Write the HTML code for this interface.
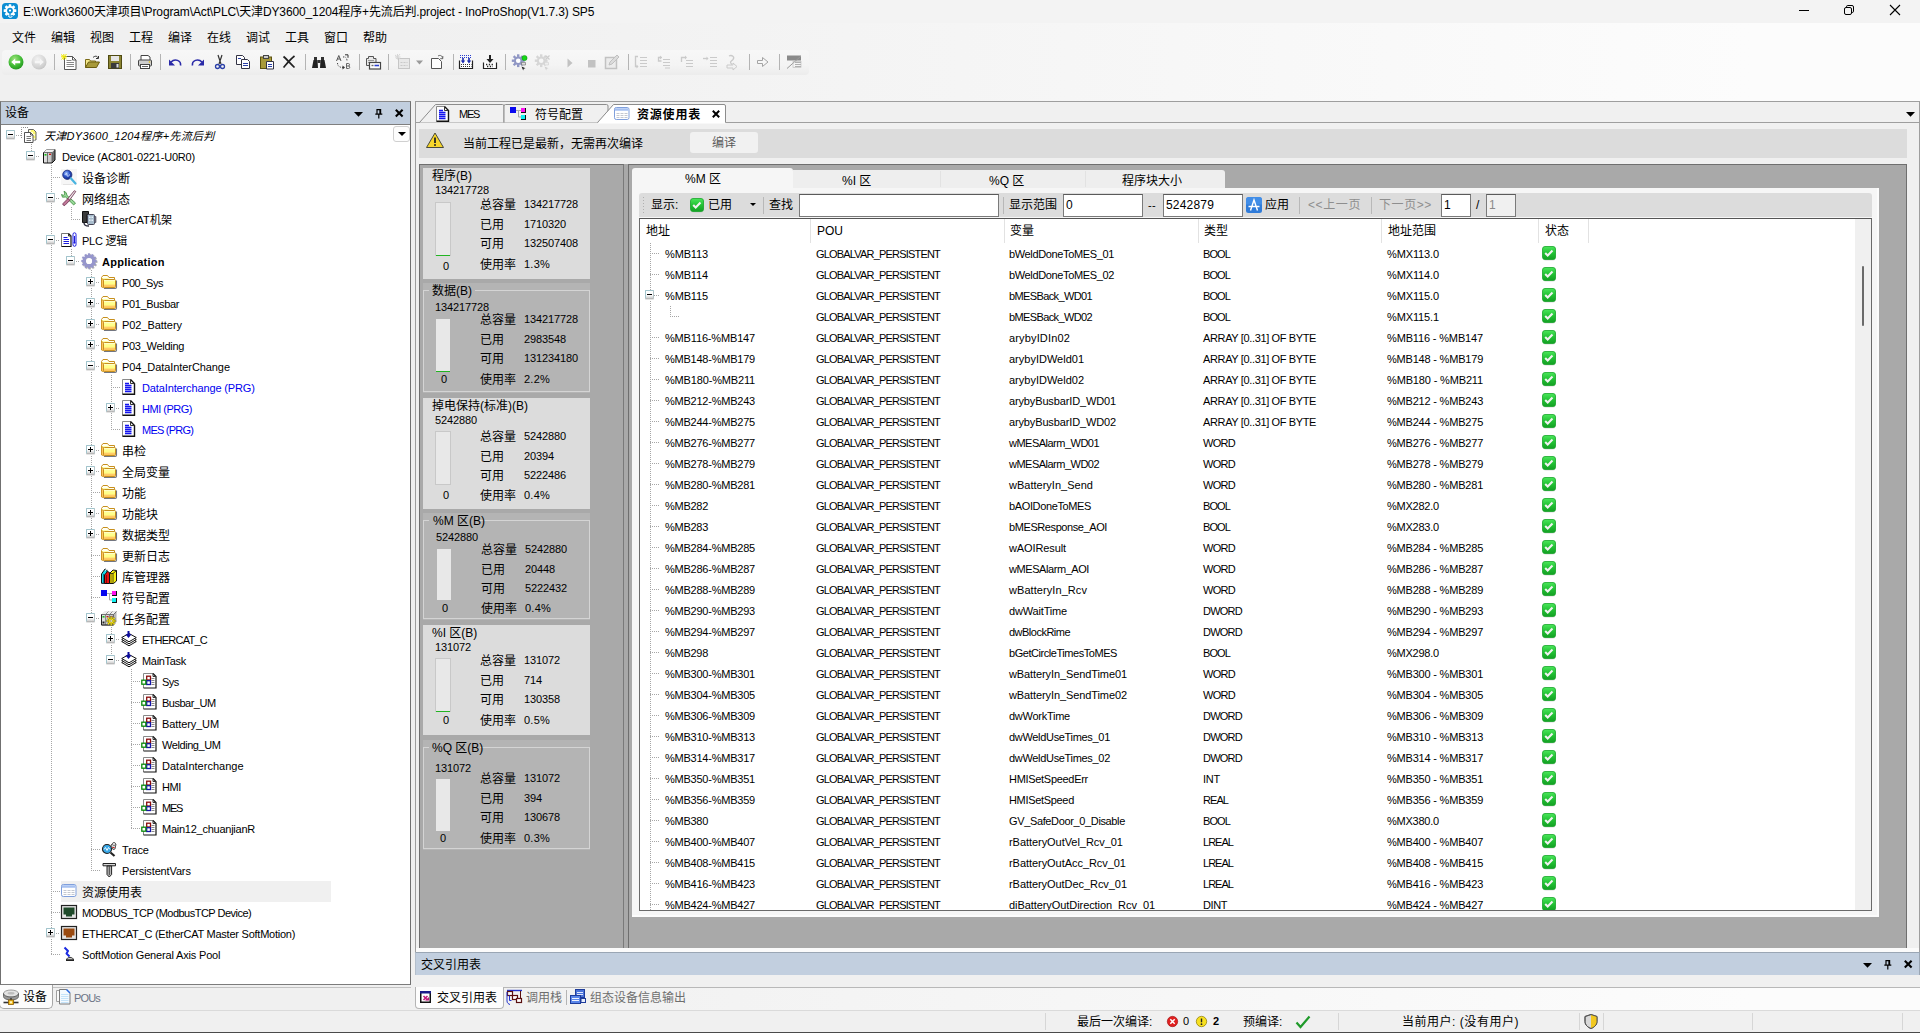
<!DOCTYPE html><html lang="zh"><head><meta charset="utf-8"><title>InoProShop</title><style>
*{box-sizing:border-box;margin:0;padding:0}
html,body{width:1920px;height:1033px;overflow:hidden}
body{position:relative;background:linear-gradient(90deg,#f0f0f0 0,#f0f0f0 400px,#f5f5f5 960px,#fafafa 1500px,#fcfcfc 1750px,#fcfcfc 100%);font-family:"Liberation Sans","Noto Sans CJK SC",sans-serif;font-size:11px;color:#000;line-height:1}
.a{position:absolute;white-space:nowrap}
.t{position:absolute;white-space:nowrap;line-height:14px;height:14px}
.cj{font-family:"Liberation Sans","Noto Sans CJK SC",sans-serif;font-size:12px}
svg{position:absolute;overflow:visible}
.dotv{position:absolute;width:1px;background-image:linear-gradient(#a6a6a6 1px,transparent 1px);background-size:1px 2px}
.doth{position:absolute;height:1px;background-image:linear-gradient(90deg,#a6a6a6 1px,transparent 1px);background-size:2px 1px}
.exp{position:absolute;width:9px;height:9px;border:1px solid #a2c4cc;border-bottom-color:#b8b8b8;border-right-color:#b4c4c8;background:linear-gradient(#fff 0,#fff 55%,#d0d0d0 100%);border-radius:1px;box-shadow:0 1px 0 #e4e4e4}
.exp:before{content:"";position:absolute;left:1px;top:3px;width:5px;height:1px;background:#000}
.exp.p:after{content:"";position:absolute;left:3px;top:1px;width:1px;height:5px;background:#000}
.inp{position:absolute;background:#fff;border:1px solid #7a7a7a;border-top-color:#5a5a5a;font-size:12px;letter-spacing:.2px;line-height:21px;padding-left:2px}
.sep{position:absolute;width:1px;background:#b8b8b8}
</style></head><body>
<div class="a" style="left:0px;top:0px;width:1920px;height:23px;background:#f3f3f3"></div>
<svg style="left:2px;top:3px" width="16" height="16" viewBox="0 0 16 16"><rect x="0" y="0" width="16" height="16" rx="3.600" fill="#0b8dd3"/><rect x="6.700" y="1.300" width="2.600" height="3" rx=".5" fill="#fff" transform="rotate(0 8 7.600)"/><rect x="6.700" y="1.300" width="2.600" height="3" rx=".5" fill="#fff" transform="rotate(45 8 7.600)"/><rect x="6.700" y="1.300" width="2.600" height="3" rx=".5" fill="#fff" transform="rotate(90 8 7.600)"/><rect x="6.700" y="1.300" width="2.600" height="3" rx=".5" fill="#fff" transform="rotate(135 8 7.600)"/><rect x="6.700" y="1.300" width="2.600" height="3" rx=".5" fill="#fff" transform="rotate(180 8 7.600)"/><rect x="6.700" y="1.300" width="2.600" height="3" rx=".5" fill="#fff" transform="rotate(225 8 7.600)"/><rect x="6.700" y="1.300" width="2.600" height="3" rx=".5" fill="#fff" transform="rotate(270 8 7.600)"/><rect x="6.700" y="1.300" width="2.600" height="3" rx=".5" fill="#fff" transform="rotate(315 8 7.600)"/><circle cx="8" cy="7.600" r="4.700" fill="#fff"/><circle cx="8" cy="7.600" r="2.900" fill="#0b8dd3"/><circle cx="8" cy="7.600" r="1.100" fill="#fff"/><path d="M8 9.500v3.800h1.600" fill="none" stroke="#0b8dd3" stroke-width="1.300"/><path d="M6.300 12.600l1 1.600h2.200l.8-1.300" fill="none" stroke="#fff" stroke-width="1"/></svg>
<div class="t " style="left:23px;top:5px;font-size:12px;letter-spacing:-0.13px">E:\Work\3600天津项目\Program\Act\PLC\天津DY3600_1204程序+先流后判.project - InoProShop(V1.7.3) SP5</div>
<svg style="left:1798px;top:4px" width="12" height="12" viewBox="0 0 12 12"><path d="M1 6.5h10" stroke="#000" stroke-width="1" fill="none"/></svg>
<svg style="left:1843px;top:4px" width="12" height="12" viewBox="0 0 12 12"><rect x="1.5" y="3.5" width="7" height="7" rx="1.5" fill="none" stroke="#000"/><path d="M3.5 3.3V2.8a1.3 1.3 0 0 1 1.3-1.3H9a1.5 1.5 0 0 1 1.5 1.5v4.2a1.3 1.3 0 0 1-1.3 1.3H8.7" fill="none" stroke="#000"/></svg>
<svg style="left:1889px;top:4px" width="12" height="12" viewBox="0 0 12 12"><path d="M1 1l10 10M11 1L1 11" stroke="#000" stroke-width="1.1" fill="none"/></svg>
<div class="t cj" style="left:12px;top:31px;font-size:12px">文件</div>
<div class="t cj" style="left:51px;top:31px;font-size:12px">编辑</div>
<div class="t cj" style="left:90px;top:31px;font-size:12px">视图</div>
<div class="t cj" style="left:129px;top:31px;font-size:12px">工程</div>
<div class="t cj" style="left:168px;top:31px;font-size:12px">编译</div>
<div class="t cj" style="left:207px;top:31px;font-size:12px">在线</div>
<div class="t cj" style="left:246px;top:31px;font-size:12px">调试</div>
<div class="t cj" style="left:285px;top:31px;font-size:12px">工具</div>
<div class="t cj" style="left:324px;top:31px;font-size:12px">窗口</div>
<div class="t cj" style="left:363px;top:31px;font-size:12px">帮助</div>
<div class="a" style="left:2px;top:50px;width:807px;height:25px;background:linear-gradient(#f7f7f7,#f4f4f4 60%,#ececec);border-radius:4px"></div>
<div class="a" style="left:54px;top:54px;width:1px;height:16px;background:#b4b4b4"></div>
<div class="a" style="left:130px;top:54px;width:1px;height:16px;background:#b4b4b4"></div>
<div class="a" style="left:160px;top:54px;width:1px;height:16px;background:#b4b4b4"></div>
<div class="a" style="left:305px;top:54px;width:1px;height:16px;background:#b4b4b4"></div>
<div class="a" style="left:359px;top:54px;width:1px;height:16px;background:#b4b4b4"></div>
<div class="a" style="left:388px;top:54px;width:1px;height:16px;background:#b4b4b4"></div>
<div class="a" style="left:453px;top:54px;width:1px;height:16px;background:#b4b4b4"></div>
<div class="a" style="left:505px;top:54px;width:1px;height:16px;background:#b4b4b4"></div>
<div class="a" style="left:628px;top:54px;width:1px;height:16px;background:#b4b4b4"></div>
<div class="a" style="left:749px;top:54px;width:1px;height:16px;background:#b4b4b4"></div>
<div class="a" style="left:779px;top:54px;width:1px;height:16px;background:#b4b4b4"></div>
<svg style="left:8px;top:54px" width="16" height="16" viewBox="0 0 16 16"><defs><radialGradient id="gg" cx=".4" cy=".3" r=".8"><stop offset="0" stop-color="#9be37a"/><stop offset=".6" stop-color="#3db832"/><stop offset="1" stop-color="#1d8a1a"/></radialGradient></defs><circle cx="8" cy="8" r="7.5" fill="url(#gg)"/><path d="M3.2 8l4-3.6v2.3h5v2.6h-5v2.3z" fill="#fff"/></svg>
<svg style="left:31px;top:54px" width="16" height="16" viewBox="0 0 16 16"><defs><radialGradient id="gy" cx=".4" cy=".3" r=".8"><stop offset="0" stop-color="#f2f2f2"/><stop offset=".7" stop-color="#d2d2d2"/><stop offset="1" stop-color="#bdbdbd"/></radialGradient></defs><circle cx="8" cy="8" r="7.5" fill="url(#gy)"/><path d="M12.8 8l-4-3.6v2.3h-5v2.6h5v2.3z" fill="#f6f6f6"/></svg>
<svg style="left:61px;top:54px" width="16" height="16" viewBox="0 0 16 16"><path d="M3.500 2.500h8l3.500 3.500v9.500h-11.500z" fill="#fff" stroke="#555"/><path d="M11.500 2.500v3.500h3.500" fill="none" stroke="#555"/><path d="M5.500 6.500h5M5.500 8.500h7.500M5.500 10.500h7.500M5.500 12.500h7.500" stroke="#888"/><path d="M0 .500l5.500 4.500M5.500 0L.500 5.500M2.800 0v6M0 2.800h6" stroke="#f0e800" stroke-width="1"/></svg>
<svg style="left:84px;top:54px" width="16" height="16" viewBox="0 0 16 16"><path d="M1.5 13.5v-8h4l1 1.5h5v1.5" fill="#f5e98a" stroke="#7a6a18"/><path d="M1.5 13.5l3-5.5h11l-3 5.5z" fill="#a89a3a" stroke="#6a5c10"/><path d="M9 3.5c2-2 4.500-1.500 5 0.500M14.500 2v2.500h-2.500" fill="none" stroke="#333"/></svg>
<svg style="left:107px;top:54px" width="16" height="16" viewBox="0 0 16 16"><rect x="1.500" y="1.500" width="13" height="13" fill="#8b8432" stroke="#4f4a12"/><rect x="4" y="2" width="8" height="5" fill="#e6e6e6"/><rect x="4" y="9" width="8" height="5.500" fill="#3a3a3a"/><rect x="9.500" y="10" width="2" height="3.500" fill="#ddd"/></svg>
<svg style="left:137px;top:54px" width="16" height="16" viewBox="0 0 16 16"><path d="M4 6V1.500h7l2 1.500V6" fill="#fff" stroke="#444"/><rect x="1.500" y="6" width="13" height="6" rx="1" fill="#cfcfcf" stroke="#444"/><rect x="3.500" y="10.500" width="9" height="4" fill="#fff" stroke="#444"/><path d="M5 12.500h6" stroke="#666"/><circle cx="12.500" cy="8" r=".8" fill="#e8c000"/></svg>
<svg style="left:167px;top:54px" width="16" height="16" viewBox="0 0 16 16"><path d="M13.500 11.500c.8-5-5.500-7.500-9.500-3.500" fill="none" stroke="#2a2aa8" stroke-width="1.600"/><path d="M2 5.500v6h6z" fill="#2a2aa8"/></svg>
<svg style="left:190px;top:54px" width="16" height="16" viewBox="0 0 16 16"><path d="M2.500 11.500c-.8-5 5.500-7.500 9.500-3.500" fill="none" stroke="#2a2aa8" stroke-width="1.600"/><path d="M14 5.500v6h-6z" fill="#2a2aa8"/></svg>
<svg style="left:212px;top:54px" width="16" height="16" viewBox="0 0 16 16"><path d="M6 1l3 9M10 1L7 10" stroke="#333" stroke-width="1.200" fill="none"/><circle cx="5.500" cy="12.500" r="2" fill="none" stroke="#2a3fa8" stroke-width="1.300"/><circle cx="10.500" cy="12.500" r="2" fill="none" stroke="#2a3fa8" stroke-width="1.300"/></svg>
<svg style="left:235px;top:54px" width="16" height="16" viewBox="0 0 16 16"><path d="M1.500 1.500h6l2 2v7h-8z" fill="#fff" stroke="#334"/><path d="M6.500 5.500h6l2 2v7h-8z" fill="#fff" stroke="#334"/><path d="M8 9.500h5M8 11.500h5" stroke="#2a3fa8"/><path d="M3 4.500h3" stroke="#2a3fa8"/></svg>
<svg style="left:259px;top:54px" width="16" height="16" viewBox="0 0 16 16"><rect x="1.500" y="3" width="11" height="11.500" fill="#a89a3a" stroke="#5c5212"/><rect x="4.500" y="1.500" width="5" height="3" fill="#ccc" stroke="#444"/><path d="M7.500 7.500h7v7.500h-7z" fill="#fff" stroke="#334"/><path d="M9 10.500h4M9 12.500h4" stroke="#2a3fa8"/></svg>
<svg style="left:281px;top:54px" width="16" height="16" viewBox="0 0 16 16"><path d="M2.500 2.500c3 2.500 7 7 11 11M13.500 2c-4 3-8 8-11 11.500" stroke="#222" stroke-width="1.700" fill="none"/></svg>
<svg style="left:311px;top:54px" width="16" height="16" viewBox="0 0 16 16"><path d="M3 3h3v3H3zM10 3h3v3h-3z" fill="#333"/><path d="M1 14l1.500-8h4l.5 8zM15 14l-1.500-8h-4l-.5 8z" fill="#222"/><rect x="6.500" y="6" width="3" height="3" fill="#333"/></svg>
<svg style="left:335px;top:54px" width="16" height="16" viewBox="0 0 16 16"><path d="M1.500 7l2.300-5.500L6 7M2.300 5h3" fill="none" stroke="#555" stroke-width="1"/><path d="M11.500 9.500v5h2a1.200 1.200 0 0 0 0-2.500h-2M13.300 12a1.200 1.200 0 0 0 0-2.500h-1.800" fill="none" stroke="#666" stroke-width="1"/><path d="M8 3c2.500-.5 4 1 4 3.500" fill="none" stroke="#444" stroke-dasharray="1.200 1.200"/><path d="M10 .800h3v3" fill="none" stroke="#333" stroke-width="1"/><path d="M2.500 9c0 3 2 4.500 5.500 4.500" fill="none" stroke="#444" stroke-dasharray="1.200 1.200"/><path d="M7.500 11.500l2.500 2-2.500 2z" fill="#333"/></svg>
<svg style="left:365px;top:54px" width="16" height="16" viewBox="0 0 16 16"><path d="M1.500 4.500h2v-2h5v2h2.500v7h-9.500z" fill="#e8e8e8" stroke="#555"/><path d="M3 6.500h6M3 8.500h6" stroke="#999"/><rect x="4.500" y="8.500" width="11" height="6.500" fill="#fff" stroke="#444" stroke-width="1.200"/><path d="M6.500 11.500h2" stroke="#666" stroke-width="1.400"/><path d="M9.500 11.500h4.500" stroke="#2a3fd0" stroke-width="1.600"/></svg>
<svg style="left:395px;top:54px" width="16" height="16" viewBox="0 0 16 16"><rect x="3.500" y="4.500" width="11" height="10" fill="#e8e8e8" stroke="#c6c6c6"/><path d="M5.500 8.500h7M5.500 11.500h7" stroke="#c9c9c9" stroke-dasharray="2 1"/><path d="M0 1l5 4M5 0L1 5M2.500 0v5.500M0 3h5.500" stroke="#d6d6d6"/></svg>
<svg style="left:416px;top:60px" width="7" height="5" viewBox="0 0 7 5"><path d="M0 .5h7L3.500 4.500z" fill="#9a9a9a"/></svg>
<svg style="left:429px;top:54px" width="16" height="16" viewBox="0 0 16 16"><path d="M2.500 4.500h7l3 3v7h-10z" fill="#fff" stroke="#555"/><path d="M9 2c2.500-1.500 4.500 0 4.500 2.500M13.800 2v2.700h-2.600" fill="none" stroke="#666"/></svg>
<svg style="left:458px;top:54px" width="16" height="16" viewBox="0 0 16 16"><path d="M1.500 6.500v8h13v-8" fill="#fff" stroke="#222" stroke-width="1.200"/><path d="M3 10.500h10.500M3 12.500h10.500" stroke="#333" stroke-dasharray="1 1"/><path d="M2 1.500h12M2 3.500h12" stroke="#2a3fd0" stroke-dasharray="1 1"/><path d="M5 4v4M11 4v4" stroke="#1a2ab0" stroke-width="1.600"/><path d="M2.800 6.500h4.400L5 9.500zM8.800 6.500h4.400L11 9.500z" fill="#1a2ab0"/></svg>
<svg style="left:482px;top:54px" width="16" height="16" viewBox="0 0 16 16"><path d="M1.500 8.500v6h13v-6" fill="#fff" stroke="#222" stroke-width="1.200"/><path d="M4 10.500h8M5 12.500h6" stroke="#222" stroke-width="1.300" stroke-dasharray="1.300 1.500"/><path d="M8 1v5" stroke="#222" stroke-width="2"/><path d="M4.500 5L8 9l3.500-4z" fill="#222"/></svg>
<svg style="left:512px;top:54px" width="16" height="16" viewBox="0 0 16 16"><rect x="5" y=".300" width="2.400" height="2.600" fill="#8f96c4" transform="rotate(0 6.200 6.700)"/><rect x="5" y=".300" width="2.400" height="2.600" fill="#8f96c4" transform="rotate(45 6.200 6.700)"/><rect x="5" y=".300" width="2.400" height="2.600" fill="#8f96c4" transform="rotate(90 6.200 6.700)"/><rect x="5" y=".300" width="2.400" height="2.600" fill="#8f96c4" transform="rotate(135 6.200 6.700)"/><rect x="5" y=".300" width="2.400" height="2.600" fill="#8f96c4" transform="rotate(180 6.200 6.700)"/><rect x="5" y=".300" width="2.400" height="2.600" fill="#8f96c4" transform="rotate(225 6.200 6.700)"/><rect x="5" y=".300" width="2.400" height="2.600" fill="#8f96c4" transform="rotate(270 6.200 6.700)"/><rect x="5" y=".300" width="2.400" height="2.600" fill="#8f96c4" transform="rotate(315 6.200 6.700)"/><circle cx="6.200" cy="6.700" r="4.300" fill="#8f96c4"/><circle cx="6.200" cy="6.700" r="2.300" fill="#fff"/><circle cx="12.500" cy="4" r="2.600" fill="#16d616" stroke="#0a8a0a" stroke-width=".5"/><path d="M9.500 8.500h4v2.500h-4z" fill="#ddd" stroke="#666" stroke-width=".6"/><path d="M9.500 12.500l4 1.800-1.800.5-.5 1.700z" fill="#222"/></svg>
<svg style="left:535px;top:54px" width="16" height="16" viewBox="0 0 16 16"><rect x="5" y=".300" width="2.400" height="2.600" fill="#d6d6d6" transform="rotate(0 6.200 6.700)"/><rect x="5" y=".300" width="2.400" height="2.600" fill="#d6d6d6" transform="rotate(45 6.200 6.700)"/><rect x="5" y=".300" width="2.400" height="2.600" fill="#d6d6d6" transform="rotate(90 6.200 6.700)"/><rect x="5" y=".300" width="2.400" height="2.600" fill="#d6d6d6" transform="rotate(135 6.200 6.700)"/><rect x="5" y=".300" width="2.400" height="2.600" fill="#d6d6d6" transform="rotate(180 6.200 6.700)"/><rect x="5" y=".300" width="2.400" height="2.600" fill="#d6d6d6" transform="rotate(225 6.200 6.700)"/><rect x="5" y=".300" width="2.400" height="2.600" fill="#d6d6d6" transform="rotate(270 6.200 6.700)"/><rect x="5" y=".300" width="2.400" height="2.600" fill="#d6d6d6" transform="rotate(315 6.200 6.700)"/><circle cx="6.200" cy="6.700" r="4.300" fill="#d6d6d6"/><circle cx="6.200" cy="6.700" r="2.300" fill="#f6f6f6"/><path d="M10.500 1.500l4 4M14.500 1.500l-4 4" stroke="#cdcdcd" stroke-width="1.200"/><path d="M9.500 8.500h4v2.500h-4z" fill="#eee" stroke="#d0d0d0" stroke-width=".6"/><path d="M9.500 12.500l4 1.800-1.800.5-.5 1.700z" fill="#cfcfcf"/></svg>
<svg style="left:562px;top:54px" width="16" height="16" viewBox="0 0 16 16"><path d="M5.500 4.500l5 4.500-5 4.500z" fill="#c2c2c2"/></svg>
<svg style="left:584px;top:54px" width="16" height="16" viewBox="0 0 16 16"><rect x="4" y="6" width="7.500" height="7.500" fill="#c2c2c2"/></svg>
<svg style="left:604px;top:54px" width="16" height="16" viewBox="0 0 16 16"><rect x="1.500" y="3.500" width="11" height="11" fill="#ececec" stroke="#c2c2c2" stroke-width="1.500"/><path d="M5 11l1-3 7-7 2 2-7 7z" fill="#dcdcdc" stroke="#c0c0c0"/></svg>
<svg style="left:633px;top:54px" width="16" height="16" viewBox="0 0 16 16"><path d="M7 3.500h7M7 6.500h7M7 9.500h7M7 12.500h7" stroke="#cacaca"/><path d="M5 2.500H2.500v10h2" fill="none" stroke="#cacaca" stroke-width="1.300"/><path d="M3.500 10.500l2 2-2 2z" fill="#cacaca"/></svg>
<svg style="left:656px;top:54px" width="16" height="16" viewBox="0 0 16 16"><path d="M7 5.500h7M7 8.500h7M7 11.500h7M9 14h5" stroke="#cacaca"/><path d="M6 3.500H2.500v3.500h3" fill="none" stroke="#cacaca" stroke-width="1.300"/><path d="M5 1.500l-2 2 2 2z" fill="#cacaca"/></svg>
<svg style="left:679px;top:54px" width="16" height="16" viewBox="0 0 16 16"><path d="M7 6.500h7M7 9.500h7M7 12.500h7" stroke="#cacaca"/><path d="M2.500 8V3.500h4" fill="none" stroke="#cacaca" stroke-width="1.300"/><path d="M6 1.500l2 2-2 2z" fill="#cacaca"/></svg>
<svg style="left:702px;top:54px" width="16" height="16" viewBox="0 0 16 16"><path d="M8 3.500h7M8 6.500h7M8 9.500h7M8 12.500h7" stroke="#cacaca"/><path d="M1 4.500h4" stroke="#cacaca" stroke-width="1.300"/><path d="M4.500 2.500l2 2-2 2z" fill="#cacaca"/></svg>
<svg style="left:724px;top:54px" width="16" height="16" viewBox="0 0 16 16"><path d="M5 2c3-1.500 6 1 4 3.500-2 2-4 2.500-1 5" fill="none" stroke="#cacaca" stroke-width="1.300"/><path d="M3 11h6v-2l4 3.500-4 3.500v-2H3z" fill="#f2f2f2" stroke="#cacaca"/></svg>
<svg style="left:755px;top:54px" width="16" height="16" viewBox="0 0 16 16"><path d="M2.500 6.500h5v-3l5.500 4.500-5.500 4.500v-3h-5z" fill="#f6f6f6" stroke="#a4a4a4"/></svg>
<svg style="left:786px;top:54px" width="16" height="16" viewBox="0 0 16 16"><rect x="1" y="1.500" width="14" height="5" fill="#8a8a8a"/><path d="M1 14.500L15 2" stroke="#9a9a9a"/><path d="M9 8.500h6M9 10.500h6M9 12.500h6" stroke="#b0b0b0"/><rect x="7" y="7.500" width="8" height="6" fill="none" stroke="#b8b8b8" stroke-width=".6"/></svg>
<div class="a" style="left:0px;top:101px;width:411px;height:884px;background:#fff;border:1px solid #8c8c8c;border-left-color:#707070;border-right-color:#707070;border-bottom-color:#7c7c7c"></div>
<div class="a" style="left:1px;top:102px;width:409px;height:22px;background:#c2cfdf"></div>
<div class="a" style="left:1px;top:124px;width:409px;height:1px;background:#7f7f7f"></div>
<div class="t cj" style="left:5px;top:106px;font-size:12px">设备</div>
<svg style="left:354px;top:112px" width="9" height="5" viewBox="0 0 9 5"><path d="M0 0h9L4.500 4.800z" fill="#000"/></svg>
<svg style="left:375px;top:109px" width="8" height="10" viewBox="0 0 8 10"><path d="M2 .600h3.600v4.400H2zM.300 5.200h7M3.800 5.200v4.300" fill="none" stroke="#000" stroke-width="1.200"/><path d="M5 1v4" stroke="#000" stroke-width="1.300"/></svg>
<svg style="left:395px;top:109px" width="9" height="9" viewBox="0 0 9 9"><path d="M.800 .800l6.800 6.600M7.600 .800l-6.800 6.600" stroke="#000" stroke-width="2.100"/></svg>
<div class="a" style="left:393px;top:126px;width:17px;height:16px;background:#fdfdfd;border:1px solid #d0d0d0;border-radius:3px"></div>
<svg style="left:398px;top:132px" width="8" height="4" viewBox="0 0 8 4"><path d="M0 0h8L4 4z" fill="#000"/></svg>
<svg width="0" height="0" style="left:0;top:0"><defs><linearGradient id="fg" x1="0" y1="0" x2="0" y2="1"><stop offset="0" stop-color="#ffffff"/><stop offset=".22" stop-color="#ffff9a"/><stop offset=".6" stop-color="#ffff80"/><stop offset=".66" stop-color="#ffd070"/><stop offset="1" stop-color="#ffc050"/></linearGradient><linearGradient id="cab" x1="0" y1="0" x2="1" y2="0"><stop offset="0" stop-color="#e4e4e4"/><stop offset="1" stop-color="#b4b4b4"/></linearGradient><radialGradient id="glb" cx=".4" cy=".35" r=".7"><stop offset="0" stop-color="#a8c8ff"/><stop offset=".5" stop-color="#2a52c8"/><stop offset="1" stop-color="#14247a"/></radialGradient></defs></svg>
<div class="a" style="left:61px;top:881px;width:270px;height:21px;background:#f0f0f0"></div>
<div class="dotv" style="left:31px;top:144px;height:13px"></div>
<div class="dotv" style="left:51px;top:165px;height:790px"></div>
<div class="dotv" style="left:71px;top:207px;height:13px"></div>
<div class="dotv" style="left:71px;top:249px;height:13px"></div>
<div class="dotv" style="left:91px;top:270px;height:601px"></div>
<div class="dotv" style="left:111px;top:375px;height:55px"></div>
<div class="dotv" style="left:111px;top:627px;height:34px"></div>
<div class="dotv" style="left:131px;top:669px;height:160px"></div>
<div class="doth" style="left:16px;top:135px;width:5px"></div>
<div class="exp " style="left:6px;top:130px"></div>
<svg style="left:21px;top:127px" width="16" height="16" viewBox="0 0 16 16"><path d="M.500 11V.500H7.500" fill="none" stroke="#8a8a8a" stroke-dasharray="1 1"/><path d="M7.500 2.500h5l2.500 2.500v8h-7.500z" fill="#fbf870" stroke="#666"/><path d="M8 3h2v2h-2zM10 5h2v2h-2zM12 7h2v2h-2zM8 7h2v2h-2zM12 11h2v2h-2z" fill="#fff" opacity=".7"/><path d="M3.500 5.500h6l2.500 2.500v7.500h-8.500z" fill="#fff" stroke="#555"/><path d="M9.500 5.500v2.500h2.500" fill="none" stroke="#555"/><path d="M5.500 9.500h4.500M5.500 11.500h4.500M5.500 13.500h4.500" stroke="#777"/></svg>
<div class="t " style="left:44px;top:129px;font-style:italic;letter-spacing:0.29px">天津DY3600_1204程序+先流后判</div>
<div class="doth" style="left:36px;top:156px;width:4px"></div>
<div class="exp " style="left:26px;top:151px"></div>
<svg style="left:41px;top:148px" width="16" height="16" viewBox="0 0 16 16"><path d="M2.500 4.500l3-3h8.500v10.500l-3 3h-8.500z" fill="url(#cab)"/><path d="M2.500 4.500l3-3h8.500l-3 3z" fill="#f0f0f0"/><path d="M11 4.500l3-3v10.500l-3 3z" fill="#6e6e6e"/><path d="M2.500 4.500h8.500v10.500M6.500 4.500v10.500" fill="none" stroke="#555" stroke-width=".8"/><path d="M2.500 4.500l3-3h8.500" fill="none" stroke="#888" stroke-width=".8"/><path d="M2.500 4.500v10.500h8.500l3-3V1.500" fill="none" stroke="#111" stroke-width="1"/><rect x="3.500" y="6" width="2" height="1.600" fill="#18c018"/><rect x="8" y="5.600" width="2" height="1.400" fill="#c81818"/></svg>
<div class="t " style="left:62px;top:150px;;letter-spacing:-0.19px">Device (AC801-0221-U0R0)</div>
<div class="doth" style="left:51px;top:177px;width:9px"></div>
<svg style="left:61px;top:169px" width="16" height="16" viewBox="0 0 16 16"><rect x="0" y="0" width="16" height="16" fill="#f6f6f6"/><circle cx="6.300" cy="5.800" r="4.600" fill="url(#glb)" stroke="#1a2a7a" stroke-width=".8"/><path d="M4 6c1-2 1.500-2 2 0s1.500 2 2.500-.5" fill="none" stroke="#dbe8ff" stroke-width=".9"/><path d="M9.800 9.300l4.700 5.200" stroke="#48b4e0" stroke-width="2.200" stroke-linecap="round"/><path d="M2 15.500h10" stroke="#e2e2e2"/></svg>
<div class="t cj" style="left:82px;top:172px;">设备诊断</div>
<div class="doth" style="left:56px;top:198px;width:4px"></div>
<div class="exp " style="left:46px;top:193px"></div>
<svg style="left:61px;top:190px" width="16" height="16" viewBox="0 0 16 16"><path d="M3 1.200l2.200 1.500 .8 2.800 8.500 7.500-1.800 2-8.200-8-3 .2L.500 4.500l2 .8 1.300-1.300z" fill="#98d898" stroke="#3a8a3a" stroke-width=".8"/><path d="M14.800 1.500l-1.500-.8-6.800 8.300 1.800 1.500z" fill="#e8e0e4" stroke="#6a2a4a" stroke-width=".8"/><path d="M7 8.500l1.800 1.800-4.800 5c-1 .8-2.800-.6-2-1.800z" fill="#c07898" stroke="#6a2a4a" stroke-width=".8"/></svg>
<div class="t cj" style="left:82px;top:193px;">网络组态</div>
<div class="doth" style="left:71px;top:219px;width:9px"></div>
<svg style="left:81px;top:211px" width="16" height="16" viewBox="0 0 16 16"><path d="M1.500 .500h6v3h-1.500v8h-4.500z" fill="#3a3a3a" stroke="#111"/><path d="M3 11.500c0 3 1.500 3.500 5 3.500" fill="none" stroke="#334" stroke-width="1.500"/><rect x="6.500" y="3.500" width="7" height="10" rx="1" fill="#a8bccc" stroke="#445"/><path d="M8.500 5.500v1.500M10 5.500v1.500M11.500 5.500v1.500M8.500 8.500v1.500M10 8.500v1.500M11.500 8.500v1.500" stroke="#e8f0f8"/><path d="M13.500 5.500h1.500v6h-1.500" fill="#778" stroke="#445" stroke-width=".6"/></svg>
<div class="t " style="left:102px;top:213px;;letter-spacing:0.05px">EtherCAT机架</div>
<div class="doth" style="left:56px;top:240px;width:4px"></div>
<div class="exp " style="left:46px;top:235px"></div>
<svg style="left:61px;top:232px" width="16" height="16" viewBox="0 0 16 16"><path d="M.500 1.500h7l2.500 2.500v10.500H.500z" fill="#fff"/><path d="M.500 14.500V1.500h7" fill="none" stroke="#777"/><path d="M7.500 1.500l2.500 2.500v10.500H.500" fill="none" stroke="#111" stroke-width="1.200"/><path d="M7.500 1.500v2.500h2.500" fill="none" stroke="#333"/><path d="M2.500 5.500h4M2.500 7.500h5.500M2.500 9.500h5.500M2.500 11.500h5.500" stroke="#1a1ae0" stroke-width="1.100"/><rect x="12" y=".800" width="3" height="13.500" rx="1.500" fill="none" stroke="#1a1ae0" stroke-width="1"/><path d="M13.500 4v7" stroke="#1a1ae0"/><path d="M12.300 10l1.200 2 1.200-2z" fill="#1a1ae0"/></svg>
<div class="t " style="left:82px;top:234px;;letter-spacing:-0.24px">PLC 逻辑</div>
<div class="doth" style="left:76px;top:261px;width:4px"></div>
<div class="exp " style="left:66px;top:256px"></div>
<svg style="left:81px;top:253px" width="16" height="16" viewBox="0 0 16 16"><g transform="translate(.8 .8)" opacity=".45"><rect x="6.900" y=".300" width="2.200" height="3" fill="#555" transform="rotate(0 8 8)"/><rect x="6.900" y=".300" width="2.200" height="3" fill="#555" transform="rotate(30 8 8)"/><rect x="6.900" y=".300" width="2.200" height="3" fill="#555" transform="rotate(60 8 8)"/><rect x="6.900" y=".300" width="2.200" height="3" fill="#555" transform="rotate(90 8 8)"/><rect x="6.900" y=".300" width="2.200" height="3" fill="#555" transform="rotate(120 8 8)"/><rect x="6.900" y=".300" width="2.200" height="3" fill="#555" transform="rotate(150 8 8)"/><rect x="6.900" y=".300" width="2.200" height="3" fill="#555" transform="rotate(180 8 8)"/><rect x="6.900" y=".300" width="2.200" height="3" fill="#555" transform="rotate(210 8 8)"/><rect x="6.900" y=".300" width="2.200" height="3" fill="#555" transform="rotate(240 8 8)"/><rect x="6.900" y=".300" width="2.200" height="3" fill="#555" transform="rotate(270 8 8)"/><rect x="6.900" y=".300" width="2.200" height="3" fill="#555" transform="rotate(300 8 8)"/><rect x="6.900" y=".300" width="2.200" height="3" fill="#555" transform="rotate(330 8 8)"/><circle cx="8" cy="8" r="4.600" fill="none" stroke="#555" stroke-width="3"/></g><rect x="6.900" y=".300" width="2.200" height="3" fill="#9696cc" transform="rotate(0 8 8)"/><rect x="6.900" y=".300" width="2.200" height="3" fill="#9696cc" transform="rotate(30 8 8)"/><rect x="6.900" y=".300" width="2.200" height="3" fill="#9696cc" transform="rotate(60 8 8)"/><rect x="6.900" y=".300" width="2.200" height="3" fill="#9696cc" transform="rotate(90 8 8)"/><rect x="6.900" y=".300" width="2.200" height="3" fill="#9696cc" transform="rotate(120 8 8)"/><rect x="6.900" y=".300" width="2.200" height="3" fill="#9696cc" transform="rotate(150 8 8)"/><rect x="6.900" y=".300" width="2.200" height="3" fill="#9696cc" transform="rotate(180 8 8)"/><rect x="6.900" y=".300" width="2.200" height="3" fill="#9696cc" transform="rotate(210 8 8)"/><rect x="6.900" y=".300" width="2.200" height="3" fill="#9696cc" transform="rotate(240 8 8)"/><rect x="6.900" y=".300" width="2.200" height="3" fill="#9696cc" transform="rotate(270 8 8)"/><rect x="6.900" y=".300" width="2.200" height="3" fill="#9696cc" transform="rotate(300 8 8)"/><rect x="6.900" y=".300" width="2.200" height="3" fill="#9696cc" transform="rotate(330 8 8)"/><circle cx="8" cy="8" r="4.700" fill="none" stroke="#9696cc" stroke-width="3.200"/><circle cx="8" cy="8" r="3" fill="#fff"/></svg>
<div class="t " style="left:102px;top:255px;font-weight:bold;letter-spacing:0.26px">Application</div>
<div class="doth" style="left:96px;top:282px;width:4px"></div>
<div class="exp p" style="left:86px;top:277px"></div>
<svg style="left:101px;top:275px" width="16" height="16" viewBox="0 0 16 16"><path d="M3 13.400h11.300a1.200 1.200 0 0 0 1.200-1.200V5.500" fill="none" stroke="#363c4c" stroke-width="1.100" opacity=".7"/><path d="M.500 12V2.500L2 .500h4.500L8 2.500h5.500v2.500H.500z" fill="#fffff4" stroke="#c8901e"/><path d="M1.200 3.200h6.300v1.500H1.200z" fill="#ffff90"/><path d="M.500 3.500v8.500l2 .700V4.500z" fill="#ffc860" stroke="#c8901e" stroke-width=".8"/><rect x="2.500" y="4.500" width="12" height="8" rx="1" fill="url(#fg)" stroke="#c8901e"/></svg>
<div class="t " style="left:122px;top:276px;;letter-spacing:-0.43px">P00_Sys</div>
<div class="doth" style="left:96px;top:303px;width:4px"></div>
<div class="exp p" style="left:86px;top:298px"></div>
<svg style="left:101px;top:296px" width="16" height="16" viewBox="0 0 16 16"><path d="M3 13.400h11.300a1.200 1.200 0 0 0 1.200-1.200V5.500" fill="none" stroke="#363c4c" stroke-width="1.100" opacity=".7"/><path d="M.500 12V2.500L2 .500h4.500L8 2.500h5.500v2.500H.500z" fill="#fffff4" stroke="#c8901e"/><path d="M1.200 3.200h6.300v1.500H1.200z" fill="#ffff90"/><path d="M.500 3.500v8.500l2 .700V4.500z" fill="#ffc860" stroke="#c8901e" stroke-width=".8"/><rect x="2.500" y="4.500" width="12" height="8" rx="1" fill="url(#fg)" stroke="#c8901e"/></svg>
<div class="t " style="left:122px;top:297px;;letter-spacing:-0.35px">P01_Busbar</div>
<div class="doth" style="left:96px;top:324px;width:4px"></div>
<div class="exp p" style="left:86px;top:319px"></div>
<svg style="left:101px;top:317px" width="16" height="16" viewBox="0 0 16 16"><path d="M3 13.400h11.300a1.200 1.200 0 0 0 1.200-1.200V5.500" fill="none" stroke="#363c4c" stroke-width="1.100" opacity=".7"/><path d="M.500 12V2.500L2 .500h4.500L8 2.500h5.500v2.500H.500z" fill="#fffff4" stroke="#c8901e"/><path d="M1.200 3.200h6.300v1.500H1.200z" fill="#ffff90"/><path d="M.500 3.500v8.500l2 .700V4.500z" fill="#ffc860" stroke="#c8901e" stroke-width=".8"/><rect x="2.500" y="4.500" width="12" height="8" rx="1" fill="url(#fg)" stroke="#c8901e"/></svg>
<div class="t " style="left:122px;top:318px;;letter-spacing:-0.05px">P02_Battery</div>
<div class="doth" style="left:96px;top:345px;width:4px"></div>
<div class="exp p" style="left:86px;top:340px"></div>
<svg style="left:101px;top:338px" width="16" height="16" viewBox="0 0 16 16"><path d="M3 13.400h11.300a1.200 1.200 0 0 0 1.200-1.200V5.500" fill="none" stroke="#363c4c" stroke-width="1.100" opacity=".7"/><path d="M.500 12V2.500L2 .500h4.500L8 2.500h5.500v2.500H.500z" fill="#fffff4" stroke="#c8901e"/><path d="M1.200 3.200h6.300v1.500H1.200z" fill="#ffff90"/><path d="M.500 3.500v8.500l2 .700V4.500z" fill="#ffc860" stroke="#c8901e" stroke-width=".8"/><rect x="2.500" y="4.500" width="12" height="8" rx="1" fill="url(#fg)" stroke="#c8901e"/></svg>
<div class="t " style="left:122px;top:339px;;letter-spacing:-0.29px">P03_Welding</div>
<div class="doth" style="left:96px;top:366px;width:4px"></div>
<div class="exp " style="left:86px;top:361px"></div>
<svg style="left:101px;top:359px" width="16" height="16" viewBox="0 0 16 16"><path d="M3 13.400h11.300a1.200 1.200 0 0 0 1.200-1.200V5.500" fill="none" stroke="#363c4c" stroke-width="1.100" opacity=".7"/><path d="M.500 12V2.500L2 .500h4.500L8 2.500h5.500v2.500H.500z" fill="#fffff4" stroke="#c8901e"/><path d="M1.200 3.200h6.300v1.500H1.200z" fill="#ffff90"/><path d="M.500 3.500v8.500l2 .700V4.500z" fill="#ffc860" stroke="#c8901e" stroke-width=".8"/><rect x="2.500" y="4.500" width="12" height="8" rx="1" fill="url(#fg)" stroke="#c8901e"/></svg>
<div class="t " style="left:122px;top:360px;;letter-spacing:-0.08px">P04_DataInterChange</div>
<div class="doth" style="left:111px;top:387px;width:9px"></div>
<svg style="left:121px;top:379px" width="16" height="16" viewBox="0 0 16 16"><path d="M1.500 .500h8l4 4v11h-12z" fill="#fff"/><path d="M1.500 15.500V.500h8" fill="none" stroke="#8a8a8a"/><path d="M9.500 .500l4 4v10.800h-12" fill="none" stroke="#111" stroke-width="1.400"/><path d="M9.500 .500v4h4" fill="none" stroke="#333"/><path d="M4 4.500h4M4 6.500h6.500M4 8.500h6.500M4 10.500h6.500M4 12.500h6.500" stroke="#1414f0" stroke-width="1.300"/></svg>
<div class="t " style="left:142px;top:381px;color:#0000f0;letter-spacing:-0.13px">DataInterchange (PRG)</div>
<div class="doth" style="left:116px;top:408px;width:4px"></div>
<div class="exp p" style="left:106px;top:403px"></div>
<svg style="left:121px;top:400px" width="16" height="16" viewBox="0 0 16 16"><path d="M1.500 .500h8l4 4v11h-12z" fill="#fff"/><path d="M1.500 15.500V.500h8" fill="none" stroke="#8a8a8a"/><path d="M9.500 .500l4 4v10.800h-12" fill="none" stroke="#111" stroke-width="1.400"/><path d="M9.500 .500v4h4" fill="none" stroke="#333"/><path d="M4 4.500h4M4 6.500h6.500M4 8.500h6.500M4 10.500h6.500M4 12.500h6.500" stroke="#1414f0" stroke-width="1.300"/></svg>
<div class="t " style="left:142px;top:402px;color:#0000f0;letter-spacing:-0.49px">HMI (PRG)</div>
<div class="doth" style="left:111px;top:429px;width:9px"></div>
<svg style="left:121px;top:421px" width="16" height="16" viewBox="0 0 16 16"><path d="M1.500 .500h8l4 4v11h-12z" fill="#fff"/><path d="M1.500 15.500V.500h8" fill="none" stroke="#8a8a8a"/><path d="M9.500 .500l4 4v10.800h-12" fill="none" stroke="#111" stroke-width="1.400"/><path d="M9.500 .500v4h4" fill="none" stroke="#333"/><path d="M4 4.500h4M4 6.500h6.500M4 8.500h6.500M4 10.500h6.500M4 12.500h6.500" stroke="#1414f0" stroke-width="1.300"/></svg>
<div class="t " style="left:142px;top:423px;color:#0000f0;letter-spacing:-0.78px">MES (PRG)</div>
<div class="doth" style="left:96px;top:450px;width:4px"></div>
<div class="exp p" style="left:86px;top:445px"></div>
<svg style="left:101px;top:443px" width="16" height="16" viewBox="0 0 16 16"><path d="M3 13.400h11.300a1.200 1.200 0 0 0 1.200-1.200V5.500" fill="none" stroke="#363c4c" stroke-width="1.100" opacity=".7"/><path d="M.500 12V2.500L2 .500h4.500L8 2.500h5.500v2.500H.500z" fill="#fffff4" stroke="#c8901e"/><path d="M1.200 3.200h6.300v1.500H1.200z" fill="#ffff90"/><path d="M.500 3.500v8.500l2 .700V4.500z" fill="#ffc860" stroke="#c8901e" stroke-width=".8"/><rect x="2.500" y="4.500" width="12" height="8" rx="1" fill="url(#fg)" stroke="#c8901e"/></svg>
<div class="t cj" style="left:122px;top:445px;">串检</div>
<div class="doth" style="left:96px;top:471px;width:4px"></div>
<div class="exp p" style="left:86px;top:466px"></div>
<svg style="left:101px;top:464px" width="16" height="16" viewBox="0 0 16 16"><path d="M3 13.400h11.300a1.200 1.200 0 0 0 1.200-1.200V5.500" fill="none" stroke="#363c4c" stroke-width="1.100" opacity=".7"/><path d="M.500 12V2.500L2 .500h4.500L8 2.500h5.500v2.500H.500z" fill="#fffff4" stroke="#c8901e"/><path d="M1.200 3.200h6.300v1.500H1.200z" fill="#ffff90"/><path d="M.500 3.500v8.500l2 .700V4.500z" fill="#ffc860" stroke="#c8901e" stroke-width=".8"/><rect x="2.500" y="4.500" width="12" height="8" rx="1" fill="url(#fg)" stroke="#c8901e"/></svg>
<div class="t cj" style="left:122px;top:466px;">全局变量</div>
<div class="doth" style="left:91px;top:492px;width:9px"></div>
<svg style="left:101px;top:485px" width="16" height="16" viewBox="0 0 16 16"><path d="M3 13.400h11.300a1.200 1.200 0 0 0 1.200-1.200V5.500" fill="none" stroke="#363c4c" stroke-width="1.100" opacity=".7"/><path d="M.500 12V2.500L2 .500h4.500L8 2.500h5.500v2.500H.500z" fill="#fffff4" stroke="#c8901e"/><path d="M1.200 3.200h6.300v1.500H1.200z" fill="#ffff90"/><path d="M.500 3.500v8.500l2 .700V4.500z" fill="#ffc860" stroke="#c8901e" stroke-width=".8"/><rect x="2.500" y="4.500" width="12" height="8" rx="1" fill="url(#fg)" stroke="#c8901e"/></svg>
<div class="t cj" style="left:122px;top:487px;">功能</div>
<div class="doth" style="left:96px;top:513px;width:4px"></div>
<div class="exp p" style="left:86px;top:508px"></div>
<svg style="left:101px;top:506px" width="16" height="16" viewBox="0 0 16 16"><path d="M3 13.400h11.300a1.200 1.200 0 0 0 1.200-1.200V5.500" fill="none" stroke="#363c4c" stroke-width="1.100" opacity=".7"/><path d="M.500 12V2.500L2 .500h4.500L8 2.500h5.500v2.500H.500z" fill="#fffff4" stroke="#c8901e"/><path d="M1.200 3.200h6.300v1.500H1.200z" fill="#ffff90"/><path d="M.500 3.500v8.500l2 .700V4.500z" fill="#ffc860" stroke="#c8901e" stroke-width=".8"/><rect x="2.500" y="4.500" width="12" height="8" rx="1" fill="url(#fg)" stroke="#c8901e"/></svg>
<div class="t cj" style="left:122px;top:508px;">功能块</div>
<div class="doth" style="left:96px;top:534px;width:4px"></div>
<div class="exp p" style="left:86px;top:529px"></div>
<svg style="left:101px;top:527px" width="16" height="16" viewBox="0 0 16 16"><path d="M3 13.400h11.300a1.200 1.200 0 0 0 1.200-1.200V5.500" fill="none" stroke="#363c4c" stroke-width="1.100" opacity=".7"/><path d="M.500 12V2.500L2 .500h4.500L8 2.500h5.500v2.500H.500z" fill="#fffff4" stroke="#c8901e"/><path d="M1.200 3.200h6.300v1.500H1.200z" fill="#ffff90"/><path d="M.500 3.500v8.500l2 .700V4.500z" fill="#ffc860" stroke="#c8901e" stroke-width=".8"/><rect x="2.500" y="4.500" width="12" height="8" rx="1" fill="url(#fg)" stroke="#c8901e"/></svg>
<div class="t cj" style="left:122px;top:529px;">数据类型</div>
<div class="doth" style="left:91px;top:555px;width:9px"></div>
<svg style="left:101px;top:548px" width="16" height="16" viewBox="0 0 16 16"><path d="M3 13.400h11.300a1.200 1.200 0 0 0 1.200-1.200V5.500" fill="none" stroke="#363c4c" stroke-width="1.100" opacity=".7"/><path d="M.500 12V2.500L2 .500h4.500L8 2.500h5.500v2.500H.500z" fill="#fffff4" stroke="#c8901e"/><path d="M1.200 3.200h6.300v1.500H1.200z" fill="#ffff90"/><path d="M.500 3.500v8.500l2 .700V4.500z" fill="#ffc860" stroke="#c8901e" stroke-width=".8"/><rect x="2.500" y="4.500" width="12" height="8" rx="1" fill="url(#fg)" stroke="#c8901e"/></svg>
<div class="t cj" style="left:122px;top:550px;">更新日志</div>
<div class="doth" style="left:91px;top:576px;width:9px"></div>
<svg style="left:101px;top:568px" width="16" height="16" viewBox="0 0 16 16"><path d="M.500 6l3.500-5 2 .8v13.500H.500z" fill="#18d8e8" stroke="#111"/><path d="M2.500 6v9" stroke="#0a7a8a"/><path d="M4 2.500l2-1.500" stroke="#fff"/><path d="M3.500 7l3-3.500 2 1v11h-5z" fill="#e81010" stroke="#111"/><path d="M5.500 7v8" stroke="#8a0808"/><path d="M8.500 5.500l3.500-3.500 3.500 .5v10.500l-3 2.500h-4z" fill="#f8f010" stroke="#111"/><path d="M8.500 5.500h3.500v10M12 5.500l3.500-3" fill="none" stroke="#111" stroke-width=".8"/><rect x="9" y="6" width="2.500" height="9" fill="#b8a408"/></svg>
<div class="t cj" style="left:122px;top:571px;">库管理器</div>
<div class="doth" style="left:91px;top:597px;width:9px"></div>
<svg style="left:101px;top:589px" width="16" height="16" viewBox="0 0 16 16"><rect x="0" y="1" width="6" height="6" fill="#0808f0"/><path d="M6 4.500h2.500v6.500h2.500M8.500 4.500h2.500" fill="none" stroke="#a8a8a8"/><rect x="11" y="2" width="5" height="5" fill="#111"/><rect x="11" y="2" width="4" height="4" fill="#ff10f0"/><rect x="11" y="9" width="5" height="5" fill="#111"/><rect x="11" y="9" width="4" height="4" fill="#10f0f0"/></svg>
<div class="t cj" style="left:122px;top:592px;">符号配置</div>
<div class="doth" style="left:96px;top:618px;width:4px"></div>
<div class="exp " style="left:86px;top:613px"></div>
<svg style="left:101px;top:610px" width="16" height="16" viewBox="0 0 16 16"><path d="M.500 4.500l3-3h12v10l-3 3.500h-12z" fill="url(#cab)"/><path d="M.500 4.500l3-3h12l-3 3z" fill="#eee"/><path d="M.500 4.500h12v10.500H.500zM12.500 4.500l3-3" fill="none" stroke="#555" stroke-width=".8"/><path d="M4.500 4.500v10.500M8.500 4.500v10.500M4.500 4.500l3-3M8.500 4.500l3-3" stroke="#777" stroke-width=".8"/><path d="M.500 4.500v10.500h12" fill="none" stroke="#222"/><rect x="1.500" y="6" width="2" height="1.600" fill="#18c018"/><rect x="5.500" y="6" width="2" height="1.300" fill="#c81818"/><rect x="9.500" y="6" width="2" height="1.300" fill="#c81818"/><rect x="1.500" y="11.500" width="2" height="2" fill="#222"/><rect x="9.200" y="6.300" width="2" height="2.600" fill="#f8e818" stroke="#555" stroke-width=".4" transform="rotate(0 10.200 11)"/><rect x="9.200" y="6.300" width="2" height="2.600" fill="#f8e818" stroke="#555" stroke-width=".4" transform="rotate(45 10.200 11)"/><rect x="9.200" y="6.300" width="2" height="2.600" fill="#f8e818" stroke="#555" stroke-width=".4" transform="rotate(90 10.200 11)"/><rect x="9.200" y="6.300" width="2" height="2.600" fill="#f8e818" stroke="#555" stroke-width=".4" transform="rotate(135 10.200 11)"/><rect x="9.200" y="6.300" width="2" height="2.600" fill="#f8e818" stroke="#555" stroke-width=".4" transform="rotate(180 10.200 11)"/><rect x="9.200" y="6.300" width="2" height="2.600" fill="#f8e818" stroke="#555" stroke-width=".4" transform="rotate(225 10.200 11)"/><rect x="9.200" y="6.300" width="2" height="2.600" fill="#f8e818" stroke="#555" stroke-width=".4" transform="rotate(270 10.200 11)"/><rect x="9.200" y="6.300" width="2" height="2.600" fill="#f8e818" stroke="#555" stroke-width=".4" transform="rotate(315 10.200 11)"/><circle cx="10.200" cy="11" r="3" fill="#f8e818" stroke="#6a5a00" stroke-width=".5"/><circle cx="10.200" cy="11" r="1.200" fill="#fff" stroke="#6a5a00" stroke-width=".5"/></svg>
<div class="t cj" style="left:122px;top:613px;">任务配置</div>
<div class="doth" style="left:116px;top:639px;width:4px"></div>
<div class="exp p" style="left:106px;top:634px"></div>
<svg style="left:121px;top:631px" width="16" height="16" viewBox="0 0 16 16"><path d="M.700 10.500L8 6.500l7.300 4L8 14.800z" fill="#fff" stroke="#111" stroke-width="1"/><path d="M.700 8.500L8 4.500l7.300 4L8 12.800z" fill="#fff" stroke="#111" stroke-width="1"/><path d="M.700 6.500L8 2.500l7.300 4L8 10.800z" fill="#fff" stroke="#111" stroke-width="1"/><path d="M7.500 0v4" stroke="#0a0aa0" stroke-width="2"/><path d="M4.500 3.300h6L7.500 7z" fill="#0a0aa0"/></svg>
<div class="t " style="left:142px;top:633px;;letter-spacing:-0.75px">ETHERCAT_C</div>
<div class="doth" style="left:116px;top:660px;width:4px"></div>
<div class="exp " style="left:106px;top:655px"></div>
<svg style="left:121px;top:652px" width="16" height="16" viewBox="0 0 16 16"><path d="M.700 10.500L8 6.500l7.300 4L8 14.800z" fill="#fff" stroke="#111" stroke-width="1"/><path d="M.700 8.500L8 4.500l7.300 4L8 12.800z" fill="#fff" stroke="#111" stroke-width="1"/><path d="M.700 6.500L8 2.500l7.300 4L8 10.800z" fill="#fff" stroke="#111" stroke-width="1"/><path d="M7.500 0v4" stroke="#0a0aa0" stroke-width="2"/><path d="M4.500 3.300h6L7.500 7z" fill="#0a0aa0"/></svg>
<div class="t " style="left:142px;top:654px;;letter-spacing:-0.31px">MainTask</div>
<div class="doth" style="left:131px;top:681px;width:9px"></div>
<svg style="left:141px;top:673px" width="16" height="16" viewBox="0 0 16 16"><path d="M2.500 .500h9.500l3 3v11.500h-12.500z" fill="#fff"/><path d="M2.500 15V.500h9.500" fill="none" stroke="#888"/><path d="M12 .500l3 3v11.500h-12.500" fill="none" stroke="#111" stroke-width="1.200"/><path d="M12 .500v3h3" fill="none" stroke="#333"/><path d="M10.500 5.500h3M10.500 7.500h3M10.500 9.500h3M10.500 11.500h3" stroke="#888"/><rect x="5.700" y="3.200" width="3.800" height="3.800" fill="#fff" stroke="#8a0c0c" stroke-width="1.300"/><rect x="5.700" y="7.700" width="3.800" height="3.800" fill="#fff" stroke="#1414a8" stroke-width="1.300"/><rect x=".800" y="7.200" width="4" height="4" fill="#fff" stroke="#0a8a0a" stroke-width="1.300"/></svg>
<div class="t " style="left:162px;top:675px;;letter-spacing:-0.55px">Sys</div>
<div class="doth" style="left:131px;top:702px;width:9px"></div>
<svg style="left:141px;top:694px" width="16" height="16" viewBox="0 0 16 16"><path d="M2.500 .500h9.500l3 3v11.500h-12.500z" fill="#fff"/><path d="M2.500 15V.500h9.500" fill="none" stroke="#888"/><path d="M12 .500l3 3v11.500h-12.500" fill="none" stroke="#111" stroke-width="1.200"/><path d="M12 .500v3h3" fill="none" stroke="#333"/><path d="M10.500 5.500h3M10.500 7.500h3M10.500 9.500h3M10.500 11.500h3" stroke="#888"/><rect x="5.700" y="3.200" width="3.800" height="3.800" fill="#fff" stroke="#8a0c0c" stroke-width="1.300"/><rect x="5.700" y="7.700" width="3.800" height="3.800" fill="#fff" stroke="#1414a8" stroke-width="1.300"/><rect x=".800" y="7.200" width="4" height="4" fill="#fff" stroke="#0a8a0a" stroke-width="1.300"/></svg>
<div class="t " style="left:162px;top:696px;;letter-spacing:-0.5px">Busbar_UM</div>
<div class="doth" style="left:131px;top:723px;width:9px"></div>
<svg style="left:141px;top:715px" width="16" height="16" viewBox="0 0 16 16"><path d="M2.500 .500h9.500l3 3v11.500h-12.500z" fill="#fff"/><path d="M2.500 15V.500h9.500" fill="none" stroke="#888"/><path d="M12 .500l3 3v11.500h-12.500" fill="none" stroke="#111" stroke-width="1.200"/><path d="M12 .500v3h3" fill="none" stroke="#333"/><path d="M10.500 5.500h3M10.500 7.500h3M10.500 9.500h3M10.500 11.500h3" stroke="#888"/><rect x="5.700" y="3.200" width="3.800" height="3.800" fill="#fff" stroke="#8a0c0c" stroke-width="1.300"/><rect x="5.700" y="7.700" width="3.800" height="3.800" fill="#fff" stroke="#1414a8" stroke-width="1.300"/><rect x=".800" y="7.200" width="4" height="4" fill="#fff" stroke="#0a8a0a" stroke-width="1.300"/></svg>
<div class="t " style="left:162px;top:717px;;letter-spacing:-0.11px">Battery_UM</div>
<div class="doth" style="left:131px;top:744px;width:9px"></div>
<svg style="left:141px;top:736px" width="16" height="16" viewBox="0 0 16 16"><path d="M2.500 .500h9.500l3 3v11.500h-12.500z" fill="#fff"/><path d="M2.500 15V.500h9.500" fill="none" stroke="#888"/><path d="M12 .500l3 3v11.500h-12.500" fill="none" stroke="#111" stroke-width="1.200"/><path d="M12 .500v3h3" fill="none" stroke="#333"/><path d="M10.500 5.500h3M10.500 7.500h3M10.500 9.500h3M10.500 11.500h3" stroke="#888"/><rect x="5.700" y="3.200" width="3.800" height="3.800" fill="#fff" stroke="#8a0c0c" stroke-width="1.300"/><rect x="5.700" y="7.700" width="3.800" height="3.800" fill="#fff" stroke="#1414a8" stroke-width="1.300"/><rect x=".800" y="7.200" width="4" height="4" fill="#fff" stroke="#0a8a0a" stroke-width="1.300"/></svg>
<div class="t " style="left:162px;top:738px;;letter-spacing:-0.43px">Welding_UM</div>
<div class="doth" style="left:131px;top:765px;width:9px"></div>
<svg style="left:141px;top:757px" width="16" height="16" viewBox="0 0 16 16"><path d="M2.500 .500h9.500l3 3v11.500h-12.500z" fill="#fff"/><path d="M2.500 15V.500h9.500" fill="none" stroke="#888"/><path d="M12 .500l3 3v11.500h-12.500" fill="none" stroke="#111" stroke-width="1.200"/><path d="M12 .500v3h3" fill="none" stroke="#333"/><path d="M10.500 5.500h3M10.500 7.500h3M10.500 9.500h3M10.500 11.500h3" stroke="#888"/><rect x="5.700" y="3.200" width="3.800" height="3.800" fill="#fff" stroke="#8a0c0c" stroke-width="1.300"/><rect x="5.700" y="7.700" width="3.800" height="3.800" fill="#fff" stroke="#1414a8" stroke-width="1.300"/><rect x=".800" y="7.200" width="4" height="4" fill="#fff" stroke="#0a8a0a" stroke-width="1.300"/></svg>
<div class="t " style="left:162px;top:759px;;letter-spacing:0.02px">DataInterchange</div>
<div class="doth" style="left:131px;top:786px;width:9px"></div>
<svg style="left:141px;top:778px" width="16" height="16" viewBox="0 0 16 16"><path d="M2.500 .500h9.500l3 3v11.500h-12.500z" fill="#fff"/><path d="M2.500 15V.500h9.500" fill="none" stroke="#888"/><path d="M12 .500l3 3v11.500h-12.500" fill="none" stroke="#111" stroke-width="1.200"/><path d="M12 .500v3h3" fill="none" stroke="#333"/><path d="M10.500 5.500h3M10.500 7.500h3M10.500 9.500h3M10.500 11.500h3" stroke="#888"/><rect x="5.700" y="3.200" width="3.800" height="3.800" fill="#fff" stroke="#8a0c0c" stroke-width="1.300"/><rect x="5.700" y="7.700" width="3.800" height="3.800" fill="#fff" stroke="#1414a8" stroke-width="1.300"/><rect x=".800" y="7.200" width="4" height="4" fill="#fff" stroke="#0a8a0a" stroke-width="1.300"/></svg>
<div class="t " style="left:162px;top:780px;;letter-spacing:-0.39px">HMI</div>
<div class="doth" style="left:131px;top:807px;width:9px"></div>
<svg style="left:141px;top:799px" width="16" height="16" viewBox="0 0 16 16"><path d="M2.500 .500h9.500l3 3v11.500h-12.500z" fill="#fff"/><path d="M2.500 15V.500h9.500" fill="none" stroke="#888"/><path d="M12 .500l3 3v11.500h-12.500" fill="none" stroke="#111" stroke-width="1.200"/><path d="M12 .500v3h3" fill="none" stroke="#333"/><path d="M10.500 5.500h3M10.500 7.500h3M10.500 9.500h3M10.500 11.500h3" stroke="#888"/><rect x="5.700" y="3.200" width="3.800" height="3.800" fill="#fff" stroke="#8a0c0c" stroke-width="1.300"/><rect x="5.700" y="7.700" width="3.800" height="3.800" fill="#fff" stroke="#1414a8" stroke-width="1.300"/><rect x=".800" y="7.200" width="4" height="4" fill="#fff" stroke="#0a8a0a" stroke-width="1.300"/></svg>
<div class="t " style="left:162px;top:801px;;letter-spacing:-1.28px">MES</div>
<div class="doth" style="left:131px;top:828px;width:9px"></div>
<svg style="left:141px;top:820px" width="16" height="16" viewBox="0 0 16 16"><path d="M2.500 .500h9.500l3 3v11.500h-12.500z" fill="#fff"/><path d="M2.500 15V.500h9.500" fill="none" stroke="#888"/><path d="M12 .500l3 3v11.500h-12.500" fill="none" stroke="#111" stroke-width="1.200"/><path d="M12 .500v3h3" fill="none" stroke="#333"/><path d="M10.500 5.500h3M10.500 7.500h3M10.500 9.500h3M10.500 11.500h3" stroke="#888"/><rect x="5.700" y="3.200" width="3.800" height="3.800" fill="#fff" stroke="#8a0c0c" stroke-width="1.300"/><rect x="5.700" y="7.700" width="3.800" height="3.800" fill="#fff" stroke="#1414a8" stroke-width="1.300"/><rect x=".800" y="7.200" width="4" height="4" fill="#fff" stroke="#0a8a0a" stroke-width="1.300"/></svg>
<div class="t " style="left:162px;top:822px;;letter-spacing:-0.25px">Main12_chuanjianR</div>
<div class="doth" style="left:91px;top:849px;width:9px"></div>
<svg style="left:101px;top:841px" width="16" height="16" viewBox="0 0 16 16"><circle cx="6" cy="8" r="4.500" fill="#38a8e8" stroke="#222" stroke-width="1.200"/><path d="M3 8.500l1.500-2 1.500 3 1.500-3 1.500 2" fill="none" stroke="#fff" stroke-width=".9"/><path d="M9.500 11.500l4 3.500" stroke="#222" stroke-width="2.200"/><path d="M10 4l3-2.500 2 1.500-1 5-2 .5z" fill="#ddd" stroke="#555"/><circle cx="13" cy="3" r="1.500" fill="#fff" stroke="#444" stroke-width=".7"/><path d="M11.500 6.500h2" stroke="#d22"/></svg>
<div class="t " style="left:122px;top:843px;;letter-spacing:-0.18px">Trace</div>
<div class="doth" style="left:91px;top:870px;width:9px"></div>
<svg style="left:101px;top:862px" width="16" height="16" viewBox="0 0 16 16"><path d="M2 1.500h12.500v2.300H2z" fill="#d8d8d8" stroke="#222" stroke-width="1"/><path d="M6 4v8.500l2.300 2.500 2.300-2.500V4z" fill="#b8b8b8" stroke="#222" stroke-width="1"/><path d="M8.300 4v9" stroke="#444"/></svg>
<div class="t " style="left:122px;top:864px;;letter-spacing:-0.14px">PersistentVars</div>
<div class="doth" style="left:51px;top:891px;width:9px"></div>
<svg style="left:61px;top:883px" width="16" height="16" viewBox="0 0 16 16"><rect x=".500" y="1.500" width="14.500" height="12" rx="1.800" fill="#fff" stroke="#7f9fdc"/><path d="M1 3.500h13.500" stroke="#a6c0f0" stroke-width="2.500"/><path d="M2.500 7.500h3M6.500 7.500h3M10.500 7.500h3M2.500 9.500h3M6.500 9.500h3M10.500 9.500h3M2.500 11.500h3M6.500 11.500h3M10.500 11.500h3" stroke="#c4c8d0"/></svg>
<div class="t cj" style="left:82px;top:886px;">资源使用表</div>
<div class="doth" style="left:51px;top:912px;width:9px"></div>
<svg style="left:61px;top:904px" width="16" height="16" viewBox="0 0 16 16"><rect x=".500" y="1.500" width="15" height="13" fill="#e4e4e4" stroke="#222" stroke-width="1.200"/><path d="M2.500 3.500h11v7h-2.500v2h-6v-2h-2.500z" fill="#1f4a2a"/></svg>
<div class="t " style="left:82px;top:906px;;letter-spacing:-0.52px">MODBUS_TCP (ModbusTCP Device)</div>
<div class="doth" style="left:56px;top:933px;width:4px"></div>
<div class="exp p" style="left:46px;top:928px"></div>
<svg style="left:61px;top:925px" width="16" height="16" viewBox="0 0 16 16"><rect x=".500" y="1.500" width="15" height="13" fill="#e4e4e4" stroke="#222" stroke-width="1.200"/><path d="M2.500 3.500h11v7h-2.500v2h-6v-2h-2.500z" fill="#9a4a10"/></svg>
<div class="t " style="left:82px;top:927px;;letter-spacing:-0.24px">ETHERCAT_C (EtherCAT Master SoftMotion)</div>
<div class="doth" style="left:51px;top:954px;width:9px"></div>
<svg style="left:61px;top:946px" width="16" height="16" viewBox="0 0 16 16"><path d="M3.500 1.500l3.500 3.500-1.500 2.500 3 3" fill="none" stroke="#1a2ae0" stroke-width="2" stroke-linejoin="round"/><path d="M5.500 14c0-3.500 7-3.500 7 0z" fill="#c8c8c8" stroke="#222" stroke-width=".9"/><path d="M5 14.300h8" stroke="#222" stroke-width="1.400"/></svg>
<div class="t " style="left:82px;top:948px;;letter-spacing:-0.17px">SoftMotion General Axis Pool</div>
<div class="a" style="left:52px;top:987px;width:359px;height:1px;background:#c2c2c2"></div>
<div class="a" style="left:-1px;top:985px;width:54px;height:24px;background:#fcfcfc;border:1px solid #a6a6a6;border-top:0;border-radius:0 0 5px 5px"></div>
<svg style="left:3px;top:989px" width="17" height="16" viewBox="0 0 17 16"><ellipse cx="8" cy="4.500" rx="7.500" ry="3.500" fill="#e4e4e4" stroke="#8a8a8a" stroke-width=".8"/><path d="M.500 4.500v3c0 2 3.300 3.500 7.500 3.500s7.500-1.500 7.500-3.500v-3c0 2-3.300 3.500-7.500 3.500S.500 6.500.500 4.500z" fill="#9a9a9a" stroke="#555" stroke-width=".8"/><ellipse cx="8" cy="4.300" rx="3.500" ry="1.300" fill="#bdbdbd"/><path d="M8 9v3" stroke="#333" stroke-width="1.400"/><path d="M.500 13.500h15" stroke="#333" stroke-width="1.600"/><rect x="5.500" y="11" width="5" height="4.500" fill="#f6c020" stroke="#8a5a00" stroke-width=".8"/><rect x="7" y="12.300" width="2" height="2" fill="#fff4c0"/></svg>
<div class="t cj" style="left:23px;top:990px;font-size:12px">设备</div>
<svg style="left:56px;top:988px" width="15" height="17" viewBox="0 0 15 17"><path d="M.500 2.500h6.500l2.500 2.500v8.500h-9z" fill="#fafafa" stroke="#a0a0a0"/><path d="M3.500 1.500h7l3.500 3.500v11h-10.500z" fill="#f4faff" stroke="#7a7a7a"/><path d="M10.500 1.500l3.500 3.500" stroke="#2a6ae0" stroke-width="1.500"/><path d="M5 6.500h7.500M5 8.500h7.500M5 10.500h7.500M5 12.500h7.500M5 14.500h7.500" stroke="#bfe0f8" stroke-width=".9"/></svg>
<div class="t " style="left:74px;top:991px;color:#6c7486;letter-spacing:-0.84px">POUs</div>
<div class="a" style="left:415px;top:101px;width:1505px;height:851px;background:#f0f0f0;border:1px solid #9e9e9e;border-bottom:0"></div>
<div class="a" style="left:416px;top:948px;width:1503px;height:4px;background:#fbfbfb"></div>
<div class="a" style="left:416px;top:122px;width:1503px;height:1px;background:#9e9e9e"></div>
<svg style="left:416px;top:102px" width="320" height="22" viewBox="0 0 320 22"><path d="M3.500 20.500L19.500 2.500H86.500a1.500 1.500 0 0 1 1.500 1.500V20.500" fill="#f0f0f0" stroke="#8c8c8c"/><path d="M88 20.500V4a1.500 1.500 0 0 1 1.500-1.500H190.500a1.500 1.500 0 0 1 1.500 1.500V20.500" fill="#f0f0f0" stroke="#8c8c8c"/><path d="M181.500 21.500L197.500 2.500H308a1.500 1.500 0 0 1 1.500 1.500V21.500z" fill="#fff" stroke="none"/><path d="M181.500 20.500L197.500 2.500H308a1.500 1.500 0 0 1 1.500 1.500V20.500" fill="none" stroke="#8c8c8c"/></svg>
<svg style="left:435px;top:106px" width="16" height="16" viewBox="0 0 16 16"><path d="M1.500 .500h8l4 4v11h-12z" fill="#fff"/><path d="M1.500 15.500V.500h8" fill="none" stroke="#8a8a8a"/><path d="M9.500 .500l4 4v10.800h-12" fill="none" stroke="#111" stroke-width="1.400"/><path d="M9.500 .500v4h4" fill="none" stroke="#333"/><path d="M4 4.500h4M4 6.500h6.500M4 8.500h6.500M4 10.500h6.500M4 12.500h6.500" stroke="#1414f0" stroke-width="1.300"/></svg>
<div class="t " style="left:459px;top:107px;;letter-spacing:-1.28px">MES</div>
<svg style="left:510px;top:106px" width="16" height="16" viewBox="0 0 16 16"><rect x="0" y="1" width="6" height="6" fill="#0808f0"/><path d="M6 4.500h2.500v6.500h2.500M8.500 4.500h2.500" fill="none" stroke="#a8a8a8"/><rect x="11" y="2" width="5" height="5" fill="#111"/><rect x="11" y="2" width="4" height="4" fill="#ff10f0"/><rect x="11" y="9" width="5" height="5" fill="#111"/><rect x="11" y="9" width="4" height="4" fill="#10f0f0"/></svg>
<div class="t cj" style="left:535px;top:108px;font-size:12px">符号配置</div>
<svg style="left:614px;top:106px" width="16" height="16" viewBox="0 0 16 16"><rect x=".500" y="1.500" width="14.500" height="12" rx="1.800" fill="#fff" stroke="#7f9fdc"/><path d="M1 3.500h13.500" stroke="#a6c0f0" stroke-width="2.500"/><path d="M2.500 7.500h3M6.500 7.500h3M10.500 7.500h3M2.500 9.500h3M6.500 9.500h3M10.500 9.500h3M2.500 11.500h3M6.500 11.500h3M10.500 11.500h3" stroke="#c4c8d0"/></svg>
<div class="t cj" style="left:637px;top:108px;font-size:12px;font-weight:bold;letter-spacing:0.8px">资源使用表</div>
<svg style="left:712px;top:110px" width="8" height="8" viewBox="0 0 8 8"><path d="M.800 .800l6.400 6.400M7.200 .800L.800 7.200" stroke="#000" stroke-width="2"/></svg>
<svg style="left:1906px;top:112px" width="9" height="5" viewBox="0 0 9 5"><path d="M0 0h9L4.500 4.800z" fill="#000"/></svg>
<div class="a" style="left:419px;top:129px;width:1488px;height:29px;background:#dcdcdc"></div>
<svg style="left:426px;top:132px" width="18" height="16" viewBox="0 0 18 16"><path d="M9 1L17.500 15.500H.500z" fill="#f7d62a" stroke="#4a4a3a" stroke-width="1" stroke-linejoin="round"/><path d="M9 5.500v5.500" stroke="#222" stroke-width="1.800"/><circle cx="9" cy="13" r="1" fill="#222"/></svg>
<div class="t cj" style="left:463px;top:137px;font-size:12px">当前工程已是最新，无需再次编译</div>
<div class="a" style="left:690px;top:132px;width:68px;height:21px;background:#f1f1f1;border-radius:3px"></div>
<div class="t cj" style="left:712px;top:136px;font-size:12px;color:#5a5a5a">编译</div>
<div class="a" style="left:419px;top:164px;width:205px;height:784px;background:#a9a9a9;border:1px solid #6f6f6f;border-right-color:#7a7a7a;border-bottom:0"></div>
<div class="a" style="left:423px;top:168px;width:167px;height:111px;background:#dcdcdc"></div>
<div class="t cj" style="left:432px;top:169px;font-size:12px">程序(B)</div>
<div class="t " style="left:435px;top:183px;;letter-spacing:-0.12px">134217728</div>
<div class="a" style="left:435px;top:202px;width:16px;height:54px;background:#e8e8e8;border:1px solid #c8c8c8"></div>
<div class="a" style="left:436px;top:255px;width:14px;height:1px;background:#22b422"></div>
<div class="t " style="left:443px;top:259px;">0</div>
<div class="t cj" style="left:480px;top:198px;font-size:12px">总容量</div>
<div class="t " style="left:524px;top:197px;;letter-spacing:-0.12px">134217728</div>
<div class="t cj" style="left:480px;top:218px;font-size:12px">已用</div>
<div class="t " style="left:524px;top:217px;;letter-spacing:-0.12px">1710320</div>
<div class="t cj" style="left:480px;top:237px;font-size:12px">可用</div>
<div class="t " style="left:524px;top:236px;;letter-spacing:-0.12px">132507408</div>
<div class="t cj" style="left:480px;top:258px;font-size:12px">使用率</div>
<div class="t " style="left:524px;top:257px;;letter-spacing:0.23px">1.3%</div>
<div class="a" style="left:423px;top:283px;width:167px;height:110px;background:#b4b4b4"></div>
<div class="a" style="left:423px;top:290px;width:167px;height:102px;border:1px solid #d4d4d4"></div>
<div class="a" style="left:429px;top:289px;width:46px;height:3px;background:#b4b4b4"></div>
<div class="t cj" style="left:432px;top:284px;font-size:12px">数据(B)</div>
<div class="t " style="left:435px;top:300px;;letter-spacing:-0.12px">134217728</div>
<div class="a" style="left:436px;top:319px;width:14px;height:53px;background:#e8e8e8"></div>
<div class="a" style="left:436px;top:371px;width:14px;height:1px;background:#22b422"></div>
<div class="t " style="left:441px;top:372px;">0</div>
<div class="t cj" style="left:480px;top:313px;font-size:12px">总容量</div>
<div class="t " style="left:524px;top:312px;;letter-spacing:-0.12px">134217728</div>
<div class="t cj" style="left:480px;top:333px;font-size:12px">已用</div>
<div class="t " style="left:524px;top:332px;;letter-spacing:-0.12px">2983548</div>
<div class="t cj" style="left:480px;top:352px;font-size:12px">可用</div>
<div class="t " style="left:524px;top:351px;;letter-spacing:-0.12px">131234180</div>
<div class="t cj" style="left:480px;top:373px;font-size:12px">使用率</div>
<div class="t " style="left:524px;top:372px;;letter-spacing:0.23px">2.2%</div>
<div class="a" style="left:423px;top:398px;width:167px;height:111px;background:#dcdcdc"></div>
<div class="t cj" style="left:432px;top:399px;font-size:12px">掉电保持(标准)(B)</div>
<div class="t " style="left:435px;top:413px;;letter-spacing:-0.12px">5242880</div>
<div class="a" style="left:435px;top:431px;width:16px;height:54px;background:#e8e8e8;border:1px solid #c8c8c8"></div>
<div class="t " style="left:443px;top:488px;">0</div>
<div class="t cj" style="left:480px;top:430px;font-size:12px">总容量</div>
<div class="t " style="left:524px;top:429px;;letter-spacing:-0.12px">5242880</div>
<div class="t cj" style="left:480px;top:450px;font-size:12px">已用</div>
<div class="t " style="left:524px;top:449px;;letter-spacing:-0.12px">20394</div>
<div class="t cj" style="left:480px;top:469px;font-size:12px">可用</div>
<div class="t " style="left:524px;top:468px;;letter-spacing:-0.12px">5222486</div>
<div class="t cj" style="left:480px;top:489px;font-size:12px">使用率</div>
<div class="t " style="left:524px;top:488px;;letter-spacing:0.23px">0.4%</div>
<div class="a" style="left:423px;top:513px;width:167px;height:107px;background:#b4b4b4"></div>
<div class="a" style="left:423px;top:520px;width:167px;height:99px;border:1px solid #d4d4d4"></div>
<div class="a" style="left:429px;top:519px;width:51px;height:3px;background:#b4b4b4"></div>
<div class="t cj" style="left:433px;top:514px;font-size:12px">%M 区(B)</div>
<div class="t " style="left:436px;top:530px;;letter-spacing:-0.12px">5242880</div>
<div class="a" style="left:437px;top:549px;width:14px;height:51px;background:#e8e8e8"></div>
<div class="t " style="left:442px;top:601px;">0</div>
<div class="t cj" style="left:481px;top:543px;font-size:12px">总容量</div>
<div class="t " style="left:525px;top:542px;;letter-spacing:-0.12px">5242880</div>
<div class="t cj" style="left:481px;top:563px;font-size:12px">已用</div>
<div class="t " style="left:525px;top:562px;;letter-spacing:-0.12px">20448</div>
<div class="t cj" style="left:481px;top:582px;font-size:12px">可用</div>
<div class="t " style="left:525px;top:581px;;letter-spacing:-0.12px">5222432</div>
<div class="t cj" style="left:481px;top:602px;font-size:12px">使用率</div>
<div class="t " style="left:525px;top:601px;;letter-spacing:0.23px">0.4%</div>
<div class="a" style="left:423px;top:625px;width:167px;height:110px;background:#dcdcdc"></div>
<div class="t cj" style="left:432px;top:626px;font-size:12px">%I 区(B)</div>
<div class="t " style="left:435px;top:640px;;letter-spacing:-0.12px">131072</div>
<div class="a" style="left:435px;top:658px;width:16px;height:54px;background:#e8e8e8;border:1px solid #c8c8c8"></div>
<div class="a" style="left:436px;top:711px;width:14px;height:1px;background:#22b422"></div>
<div class="t " style="left:443px;top:713px;">0</div>
<div class="t cj" style="left:480px;top:654px;font-size:12px">总容量</div>
<div class="t " style="left:524px;top:653px;;letter-spacing:-0.12px">131072</div>
<div class="t cj" style="left:480px;top:674px;font-size:12px">已用</div>
<div class="t " style="left:524px;top:673px;;letter-spacing:-0.12px">714</div>
<div class="t cj" style="left:480px;top:693px;font-size:12px">可用</div>
<div class="t " style="left:524px;top:692px;;letter-spacing:-0.12px">130358</div>
<div class="t cj" style="left:480px;top:714px;font-size:12px">使用率</div>
<div class="t " style="left:524px;top:713px;;letter-spacing:0.23px">0.5%</div>
<div class="a" style="left:423px;top:740px;width:167px;height:110px;background:#b4b4b4"></div>
<div class="a" style="left:423px;top:747px;width:167px;height:102px;border:1px solid #d4d4d4"></div>
<div class="a" style="left:429px;top:746px;width:51px;height:3px;background:#b4b4b4"></div>
<div class="t cj" style="left:432px;top:741px;font-size:12px">%Q 区(B)</div>
<div class="t " style="left:435px;top:761px;;letter-spacing:-0.12px">131072</div>
<div class="a" style="left:436px;top:779px;width:14px;height:52px;background:#e8e8e8"></div>
<div class="t " style="left:440px;top:831px;">0</div>
<div class="t cj" style="left:480px;top:772px;font-size:12px">总容量</div>
<div class="t " style="left:524px;top:771px;;letter-spacing:-0.12px">131072</div>
<div class="t cj" style="left:480px;top:792px;font-size:12px">已用</div>
<div class="t " style="left:524px;top:791px;;letter-spacing:-0.12px">394</div>
<div class="t cj" style="left:480px;top:811px;font-size:12px">可用</div>
<div class="t " style="left:524px;top:810px;;letter-spacing:-0.12px">130678</div>
<div class="t cj" style="left:480px;top:832px;font-size:12px">使用率</div>
<div class="t " style="left:524px;top:831px;;letter-spacing:0.23px">0.3%</div>
<div class="a" style="left:624px;top:164px;width:4px;height:784px;background:#a9a9a9"></div>
<div class="a" style="left:628px;top:164px;width:1279px;height:784px;background:#a9a9a9;border:1px solid #6f6f6f;border-bottom:0"></div>
<div class="a" style="left:632px;top:168px;width:161px;height:23px;background:#f6f6f6;border-radius:3px 3px 0 0"></div>
<div class="a" style="left:793px;top:170px;width:432px;height:18px;background:#eeeeee;border-radius:0 3px 0 0"></div>
<div class="a" style="left:940px;top:171px;width:1px;height:16px;background:#e2e2e2"></div>
<div class="a" style="left:1085px;top:171px;width:1px;height:16px;background:#e2e2e2"></div>
<div class="a" style="left:632px;top:188px;width:1247px;height:729px;background:#f6f6f6;border-right:2px solid #fcfcfc;border-bottom:2px solid #fcfcfc"></div>
<div class="t cj" style="left:685px;top:172px;font-size:12px">%M 区</div>
<div class="t cj" style="left:842px;top:174px;font-size:12px">%I 区</div>
<div class="t cj" style="left:989px;top:174px;font-size:12px">%Q 区</div>
<div class="t cj" style="left:1122px;top:174px;font-size:12px">程序块大小</div>
<div class="a" style="left:639px;top:193px;width:1233px;height:24px;background:#dcdcdc;border-radius:3px 3px 0 0"></div>
<div class="a" style="left:643px;top:197px;width:1px;height:17px;background-image:linear-gradient(#b0b0b0 1px,transparent 1px);background-size:1px 3px"></div>
<div class="t cj" style="left:651px;top:198px;font-size:12px">显示:</div>
<svg width="0" height="0" style="left:0;top:0"><defs><linearGradient id="ck" x1="0" y1="0" x2="0" y2="1"><stop offset="0" stop-color="#4ae65a"/><stop offset=".5" stop-color="#22c234"/><stop offset="1" stop-color="#14a024"/></linearGradient></defs></svg>
<svg style="left:690px;top:198px" width="14" height="15" viewBox="0 0 14 15"><rect x="1" y="1.500" width="12.500" height="13" rx="2.500" fill="#b8b8b8" opacity=".55"/><rect x=".500" y=".500" width="13" height="13" rx="2.500" fill="url(#ck)" stroke="#18a42a" stroke-width=".8"/><path d="M3.200 7l2.500 2.500 4.800-5" fill="none" stroke="#f2f2f2" stroke-width="2.100"/></svg>
<div class="t cj" style="left:708px;top:198px;font-size:12px">已用</div>
<svg style="left:750px;top:203px" width="6" height="3" viewBox="0 0 6 3"><path d="M0 0h6L3 3z" fill="#000"/></svg>
<div class="a" style="left:763px;top:197px;width:1px;height:17px;background:#b8b8b8"></div>
<div class="t cj" style="left:769px;top:198px;font-size:12px">查找</div>
<div class="inp" style="left:799px;top:194px;width:200px;height:23px"></div>
<div class="a" style="left:1003px;top:197px;width:1px;height:17px;background:#b8b8b8"></div>
<div class="t cj" style="left:1009px;top:198px;font-size:12px">显示范围</div>
<div class="inp" style="left:1063px;top:194px;width:80px;height:23px">0</div>
<div class="t " style="left:1148px;top:198px;;letter-spacing:0.34px">--</div>
<div class="inp" style="left:1163px;top:194px;width:80px;height:23px">5242879</div>
<svg style="left:1246px;top:197px" width="16" height="16" viewBox="0 0 16 16"><rect width="16" height="16" rx="2.500" fill="#2f7bd9"/><path d="M0 2.500a2.500 2.500 0 0 1 2.500-2.500h11a2.500 2.500 0 0 1 2.500 2.500v5H0z" fill="#4f9af0" opacity=".6"/><path d="M4.500 13.500L8 3l3.500 10.500M2.500 9.500h11" fill="none" stroke="#fff" stroke-width="1.400"/></svg>
<div class="t cj" style="left:1265px;top:198px;font-size:12px">应用</div>
<div class="a" style="left:1299px;top:197px;width:1px;height:17px;background:#b8b8b8"></div>
<div class="t cj" style="left:1308px;top:198px;font-size:12px;color:#8e8e8e;letter-spacing:0.59px">&lt;&lt;上一页</div>
<div class="a" style="left:1371px;top:197px;width:1px;height:17px;background:#b8b8b8"></div>
<div class="t cj" style="left:1379px;top:198px;font-size:12px;color:#8e8e8e;letter-spacing:0.59px">下一页&gt;&gt;</div>
<div class="inp" style="left:1441px;top:194px;width:30px;height:23px">1</div>
<div class="t " style="left:1476px;top:198px;font-size:12px">/</div>
<div class="inp" style="left:1486px;top:194px;width:30px;height:23px;background:#f0f0f0;color:#8a8a8a">1</div>
<div class="a" style="left:639px;top:218px;width:1233px;height:693px;background:#fff;border:1px solid #6a6a6a;border-top-color:#555"></div>
<div class="t cj" style="left:646px;top:224px;font-size:12px">地址</div>
<div class="t cj" style="left:817px;top:224px;font-size:12px">POU</div>
<div class="t cj" style="left:1010px;top:224px;font-size:12px">变量</div>
<div class="t cj" style="left:1204px;top:224px;font-size:12px">类型</div>
<div class="t cj" style="left:1388px;top:224px;font-size:12px">地址范围</div>
<div class="t cj" style="left:1545px;top:224px;font-size:12px">状态</div>
<div class="a" style="left:810px;top:219px;width:1px;height:24px;background:#e2e2e2"></div>
<div class="a" style="left:1004px;top:219px;width:1px;height:24px;background:#e2e2e2"></div>
<div class="a" style="left:1198px;top:219px;width:1px;height:24px;background:#e2e2e2"></div>
<div class="a" style="left:1381px;top:219px;width:1px;height:24px;background:#e2e2e2"></div>
<div class="a" style="left:1538px;top:219px;width:1px;height:24px;background:#e2e2e2"></div>
<div class="a" style="left:1588px;top:219px;width:1px;height:24px;background:#e2e2e2"></div>
<div class="a" style="left:1855px;top:219px;width:16px;height:691px;background:#f0f0f0"></div>
<div class="a" style="left:1862px;top:266px;width:2px;height:60px;background:#6a6a6a;border-radius:1px"></div>
<div class="a" style="left:641px;top:243px;width:1214px;height:667px;overflow:hidden">
<div class="dotv" style="left:9px;top:0;height:667px"></div>
<div class="doth" style="left:9px;top:10px;width:10px"></div>
<div class="t " style="left:24px;top:4px;;letter-spacing:-0.14px">%MB113</div>
<div class="t " style="left:175px;top:4px;;letter-spacing:-0.81px">GLOBALVAR_PERSISTENT</div>
<div class="t " style="left:368px;top:4px;;letter-spacing:-0.36px">bWeldDoneToMES_01</div>
<div class="t " style="left:562px;top:4px;;letter-spacing:-0.89px">BOOL</div>
<div class="t " style="left:746px;top:4px;;letter-spacing:-0.12px">%MX113.0</div>
<svg style="left:901px;top:3px" width="14" height="15" viewBox="0 0 14 15"><rect x="1" y="1.500" width="12.500" height="13" rx="2.500" fill="#b8b8b8" opacity=".55"/><rect x=".500" y=".500" width="13" height="13" rx="2.500" fill="url(#ck)" stroke="#18a42a" stroke-width=".8"/><path d="M3.200 7l2.500 2.500 4.800-5" fill="none" stroke="#f2f2f2" stroke-width="2.100"/></svg>
<div class="doth" style="left:9px;top:31px;width:10px"></div>
<div class="t " style="left:24px;top:25px;;letter-spacing:-0.14px">%MB114</div>
<div class="t " style="left:175px;top:25px;;letter-spacing:-0.81px">GLOBALVAR_PERSISTENT</div>
<div class="t " style="left:368px;top:25px;;letter-spacing:-0.36px">bWeldDoneToMES_02</div>
<div class="t " style="left:562px;top:25px;;letter-spacing:-0.89px">BOOL</div>
<div class="t " style="left:746px;top:25px;;letter-spacing:-0.12px">%MX114.0</div>
<svg style="left:901px;top:24px" width="14" height="15" viewBox="0 0 14 15"><rect x="1" y="1.500" width="12.500" height="13" rx="2.500" fill="#b8b8b8" opacity=".55"/><rect x=".500" y=".500" width="13" height="13" rx="2.500" fill="url(#ck)" stroke="#18a42a" stroke-width=".8"/><path d="M3.200 7l2.500 2.500 4.800-5" fill="none" stroke="#f2f2f2" stroke-width="2.100"/></svg>
<div class="doth" style="left:9px;top:52px;width:10px"></div>
<div class="exp" style="left:4px;top:47px"></div>
<div class="t " style="left:24px;top:46px;;letter-spacing:-0.14px">%MB115</div>
<div class="t " style="left:175px;top:46px;;letter-spacing:-0.81px">GLOBALVAR_PERSISTENT</div>
<div class="t " style="left:368px;top:46px;;letter-spacing:-0.62px">bMESBack_WD01</div>
<div class="t " style="left:562px;top:46px;;letter-spacing:-0.89px">BOOL</div>
<div class="t " style="left:746px;top:46px;;letter-spacing:-0.12px">%MX115.0</div>
<svg style="left:901px;top:45px" width="14" height="15" viewBox="0 0 14 15"><rect x="1" y="1.500" width="12.500" height="13" rx="2.500" fill="#b8b8b8" opacity=".55"/><rect x=".500" y=".500" width="13" height="13" rx="2.500" fill="url(#ck)" stroke="#18a42a" stroke-width=".8"/><path d="M3.200 7l2.500 2.500 4.800-5" fill="none" stroke="#f2f2f2" stroke-width="2.100"/></svg>
<div class="dotv" style="left:29px;top:63px;height:11px"></div>
<div class="doth" style="left:29px;top:73px;width:9px"></div>
<div class="t " style="left:175px;top:67px;;letter-spacing:-0.81px">GLOBALVAR_PERSISTENT</div>
<div class="t " style="left:368px;top:67px;;letter-spacing:-0.62px">bMESBack_WD02</div>
<div class="t " style="left:562px;top:67px;;letter-spacing:-0.89px">BOOL</div>
<div class="t " style="left:746px;top:67px;;letter-spacing:-0.12px">%MX115.1</div>
<svg style="left:901px;top:66px" width="14" height="15" viewBox="0 0 14 15"><rect x="1" y="1.500" width="12.500" height="13" rx="2.500" fill="#b8b8b8" opacity=".55"/><rect x=".500" y=".500" width="13" height="13" rx="2.500" fill="url(#ck)" stroke="#18a42a" stroke-width=".8"/><path d="M3.200 7l2.500 2.500 4.800-5" fill="none" stroke="#f2f2f2" stroke-width="2.100"/></svg>
<div class="doth" style="left:9px;top:94px;width:10px"></div>
<div class="t " style="left:24px;top:88px;;letter-spacing:-0.16px">%MB116-%MB147</div>
<div class="t " style="left:175px;top:88px;;letter-spacing:-0.81px">GLOBALVAR_PERSISTENT</div>
<div class="t " style="left:368px;top:88px;;letter-spacing:0.15px">arybyIDIn02</div>
<div class="t " style="left:562px;top:88px;;letter-spacing:-0.36px">ARRAY [0..31] OF BYTE</div>
<div class="t " style="left:746px;top:88px;;letter-spacing:-0.15px">%MB116 - %MB147</div>
<svg style="left:901px;top:87px" width="14" height="15" viewBox="0 0 14 15"><rect x="1" y="1.500" width="12.500" height="13" rx="2.500" fill="#b8b8b8" opacity=".55"/><rect x=".500" y=".500" width="13" height="13" rx="2.500" fill="url(#ck)" stroke="#18a42a" stroke-width=".8"/><path d="M3.200 7l2.500 2.500 4.800-5" fill="none" stroke="#f2f2f2" stroke-width="2.100"/></svg>
<div class="doth" style="left:9px;top:115px;width:10px"></div>
<div class="t " style="left:24px;top:109px;;letter-spacing:-0.23px">%MB148-%MB179</div>
<div class="t " style="left:175px;top:109px;;letter-spacing:-0.81px">GLOBALVAR_PERSISTENT</div>
<div class="t " style="left:368px;top:109px;;">arybyIDWeld01</div>
<div class="t " style="left:562px;top:109px;;letter-spacing:-0.36px">ARRAY [0..31] OF BYTE</div>
<div class="t " style="left:746px;top:109px;;letter-spacing:-0.2px">%MB148 - %MB179</div>
<svg style="left:901px;top:108px" width="14" height="15" viewBox="0 0 14 15"><rect x="1" y="1.500" width="12.500" height="13" rx="2.500" fill="#b8b8b8" opacity=".55"/><rect x=".500" y=".500" width="13" height="13" rx="2.500" fill="url(#ck)" stroke="#18a42a" stroke-width=".8"/><path d="M3.200 7l2.500 2.500 4.800-5" fill="none" stroke="#f2f2f2" stroke-width="2.100"/></svg>
<div class="doth" style="left:9px;top:136px;width:10px"></div>
<div class="t " style="left:24px;top:130px;;letter-spacing:-0.16px">%MB180-%MB211</div>
<div class="t " style="left:175px;top:130px;;letter-spacing:-0.81px">GLOBALVAR_PERSISTENT</div>
<div class="t " style="left:368px;top:130px;;">arybyIDWeld02</div>
<div class="t " style="left:562px;top:130px;;letter-spacing:-0.36px">ARRAY [0..31] OF BYTE</div>
<div class="t " style="left:746px;top:130px;;letter-spacing:-0.15px">%MB180 - %MB211</div>
<svg style="left:901px;top:129px" width="14" height="15" viewBox="0 0 14 15"><rect x="1" y="1.500" width="12.500" height="13" rx="2.500" fill="#b8b8b8" opacity=".55"/><rect x=".500" y=".500" width="13" height="13" rx="2.500" fill="url(#ck)" stroke="#18a42a" stroke-width=".8"/><path d="M3.200 7l2.500 2.500 4.800-5" fill="none" stroke="#f2f2f2" stroke-width="2.100"/></svg>
<div class="doth" style="left:9px;top:157px;width:10px"></div>
<div class="t " style="left:24px;top:151px;;letter-spacing:-0.23px">%MB212-%MB243</div>
<div class="t " style="left:175px;top:151px;;letter-spacing:-0.81px">GLOBALVAR_PERSISTENT</div>
<div class="t " style="left:368px;top:151px;;letter-spacing:-0.14px">arybyBusbarID_WD01</div>
<div class="t " style="left:562px;top:151px;;letter-spacing:-0.36px">ARRAY [0..31] OF BYTE</div>
<div class="t " style="left:746px;top:151px;;letter-spacing:-0.2px">%MB212 - %MB243</div>
<svg style="left:901px;top:150px" width="14" height="15" viewBox="0 0 14 15"><rect x="1" y="1.500" width="12.500" height="13" rx="2.500" fill="#b8b8b8" opacity=".55"/><rect x=".500" y=".500" width="13" height="13" rx="2.500" fill="url(#ck)" stroke="#18a42a" stroke-width=".8"/><path d="M3.200 7l2.500 2.500 4.800-5" fill="none" stroke="#f2f2f2" stroke-width="2.100"/></svg>
<div class="doth" style="left:9px;top:178px;width:10px"></div>
<div class="t " style="left:24px;top:172px;;letter-spacing:-0.23px">%MB244-%MB275</div>
<div class="t " style="left:175px;top:172px;;letter-spacing:-0.81px">GLOBALVAR_PERSISTENT</div>
<div class="t " style="left:368px;top:172px;;letter-spacing:-0.14px">arybyBusbarID_WD02</div>
<div class="t " style="left:562px;top:172px;;letter-spacing:-0.36px">ARRAY [0..31] OF BYTE</div>
<div class="t " style="left:746px;top:172px;;letter-spacing:-0.2px">%MB244 - %MB275</div>
<svg style="left:901px;top:171px" width="14" height="15" viewBox="0 0 14 15"><rect x="1" y="1.500" width="12.500" height="13" rx="2.500" fill="#b8b8b8" opacity=".55"/><rect x=".500" y=".500" width="13" height="13" rx="2.500" fill="url(#ck)" stroke="#18a42a" stroke-width=".8"/><path d="M3.200 7l2.500 2.500 4.800-5" fill="none" stroke="#f2f2f2" stroke-width="2.100"/></svg>
<div class="doth" style="left:9px;top:199px;width:10px"></div>
<div class="t " style="left:24px;top:193px;;letter-spacing:-0.23px">%MB276-%MB277</div>
<div class="t " style="left:175px;top:193px;;letter-spacing:-0.81px">GLOBALVAR_PERSISTENT</div>
<div class="t " style="left:368px;top:193px;;letter-spacing:-0.51px">wMESAlarm_WD01</div>
<div class="t " style="left:562px;top:193px;;letter-spacing:-0.71px">WORD</div>
<div class="t " style="left:746px;top:193px;;letter-spacing:-0.2px">%MB276 - %MB277</div>
<svg style="left:901px;top:192px" width="14" height="15" viewBox="0 0 14 15"><rect x="1" y="1.500" width="12.500" height="13" rx="2.500" fill="#b8b8b8" opacity=".55"/><rect x=".500" y=".500" width="13" height="13" rx="2.500" fill="url(#ck)" stroke="#18a42a" stroke-width=".8"/><path d="M3.200 7l2.500 2.500 4.800-5" fill="none" stroke="#f2f2f2" stroke-width="2.100"/></svg>
<div class="doth" style="left:9px;top:220px;width:10px"></div>
<div class="t " style="left:24px;top:214px;;letter-spacing:-0.23px">%MB278-%MB279</div>
<div class="t " style="left:175px;top:214px;;letter-spacing:-0.81px">GLOBALVAR_PERSISTENT</div>
<div class="t " style="left:368px;top:214px;;letter-spacing:-0.51px">wMESAlarm_WD02</div>
<div class="t " style="left:562px;top:214px;;letter-spacing:-0.71px">WORD</div>
<div class="t " style="left:746px;top:214px;;letter-spacing:-0.2px">%MB278 - %MB279</div>
<svg style="left:901px;top:213px" width="14" height="15" viewBox="0 0 14 15"><rect x="1" y="1.500" width="12.500" height="13" rx="2.500" fill="#b8b8b8" opacity=".55"/><rect x=".500" y=".500" width="13" height="13" rx="2.500" fill="url(#ck)" stroke="#18a42a" stroke-width=".8"/><path d="M3.200 7l2.500 2.500 4.800-5" fill="none" stroke="#f2f2f2" stroke-width="2.100"/></svg>
<div class="doth" style="left:9px;top:241px;width:10px"></div>
<div class="t " style="left:24px;top:235px;;letter-spacing:-0.23px">%MB280-%MB281</div>
<div class="t " style="left:175px;top:235px;;letter-spacing:-0.81px">GLOBALVAR_PERSISTENT</div>
<div class="t " style="left:368px;top:235px;;letter-spacing:0.01px">wBatteryIn_Send</div>
<div class="t " style="left:562px;top:235px;;letter-spacing:-0.71px">WORD</div>
<div class="t " style="left:746px;top:235px;;letter-spacing:-0.2px">%MB280 - %MB281</div>
<svg style="left:901px;top:234px" width="14" height="15" viewBox="0 0 14 15"><rect x="1" y="1.500" width="12.500" height="13" rx="2.500" fill="#b8b8b8" opacity=".55"/><rect x=".500" y=".500" width="13" height="13" rx="2.500" fill="url(#ck)" stroke="#18a42a" stroke-width=".8"/><path d="M3.200 7l2.500 2.500 4.800-5" fill="none" stroke="#f2f2f2" stroke-width="2.100"/></svg>
<div class="doth" style="left:9px;top:262px;width:10px"></div>
<div class="t " style="left:24px;top:256px;;letter-spacing:-0.27px">%MB282</div>
<div class="t " style="left:175px;top:256px;;letter-spacing:-0.81px">GLOBALVAR_PERSISTENT</div>
<div class="t " style="left:368px;top:256px;;letter-spacing:-0.37px">bAOIDoneToMES</div>
<div class="t " style="left:562px;top:256px;;letter-spacing:-0.89px">BOOL</div>
<div class="t " style="left:746px;top:256px;;letter-spacing:-0.23px">%MX282.0</div>
<svg style="left:901px;top:255px" width="14" height="15" viewBox="0 0 14 15"><rect x="1" y="1.500" width="12.500" height="13" rx="2.500" fill="#b8b8b8" opacity=".55"/><rect x=".500" y=".500" width="13" height="13" rx="2.500" fill="url(#ck)" stroke="#18a42a" stroke-width=".8"/><path d="M3.200 7l2.500 2.500 4.800-5" fill="none" stroke="#f2f2f2" stroke-width="2.100"/></svg>
<div class="doth" style="left:9px;top:283px;width:10px"></div>
<div class="t " style="left:24px;top:277px;;letter-spacing:-0.27px">%MB283</div>
<div class="t " style="left:175px;top:277px;;letter-spacing:-0.81px">GLOBALVAR_PERSISTENT</div>
<div class="t " style="left:368px;top:277px;;letter-spacing:-0.41px">bMESResponse_AOI</div>
<div class="t " style="left:562px;top:277px;;letter-spacing:-0.89px">BOOL</div>
<div class="t " style="left:746px;top:277px;;letter-spacing:-0.23px">%MX283.0</div>
<svg style="left:901px;top:276px" width="14" height="15" viewBox="0 0 14 15"><rect x="1" y="1.500" width="12.500" height="13" rx="2.500" fill="#b8b8b8" opacity=".55"/><rect x=".500" y=".500" width="13" height="13" rx="2.500" fill="url(#ck)" stroke="#18a42a" stroke-width=".8"/><path d="M3.200 7l2.500 2.500 4.800-5" fill="none" stroke="#f2f2f2" stroke-width="2.100"/></svg>
<div class="doth" style="left:9px;top:304px;width:10px"></div>
<div class="t " style="left:24px;top:298px;;letter-spacing:-0.23px">%MB284-%MB285</div>
<div class="t " style="left:175px;top:298px;;letter-spacing:-0.81px">GLOBALVAR_PERSISTENT</div>
<div class="t " style="left:368px;top:298px;;letter-spacing:-0.11px">wAOIResult</div>
<div class="t " style="left:562px;top:298px;;letter-spacing:-0.71px">WORD</div>
<div class="t " style="left:746px;top:298px;;letter-spacing:-0.2px">%MB284 - %MB285</div>
<svg style="left:901px;top:297px" width="14" height="15" viewBox="0 0 14 15"><rect x="1" y="1.500" width="12.500" height="13" rx="2.500" fill="#b8b8b8" opacity=".55"/><rect x=".500" y=".500" width="13" height="13" rx="2.500" fill="url(#ck)" stroke="#18a42a" stroke-width=".8"/><path d="M3.200 7l2.500 2.500 4.800-5" fill="none" stroke="#f2f2f2" stroke-width="2.100"/></svg>
<div class="doth" style="left:9px;top:325px;width:10px"></div>
<div class="t " style="left:24px;top:319px;;letter-spacing:-0.23px">%MB286-%MB287</div>
<div class="t " style="left:175px;top:319px;;letter-spacing:-0.81px">GLOBALVAR_PERSISTENT</div>
<div class="t " style="left:368px;top:319px;;letter-spacing:-0.43px">wMESAlarm_AOI</div>
<div class="t " style="left:562px;top:319px;;letter-spacing:-0.71px">WORD</div>
<div class="t " style="left:746px;top:319px;;letter-spacing:-0.2px">%MB286 - %MB287</div>
<svg style="left:901px;top:318px" width="14" height="15" viewBox="0 0 14 15"><rect x="1" y="1.500" width="12.500" height="13" rx="2.500" fill="#b8b8b8" opacity=".55"/><rect x=".500" y=".500" width="13" height="13" rx="2.500" fill="url(#ck)" stroke="#18a42a" stroke-width=".8"/><path d="M3.200 7l2.500 2.500 4.800-5" fill="none" stroke="#f2f2f2" stroke-width="2.100"/></svg>
<div class="doth" style="left:9px;top:346px;width:10px"></div>
<div class="t " style="left:24px;top:340px;;letter-spacing:-0.23px">%MB288-%MB289</div>
<div class="t " style="left:175px;top:340px;;letter-spacing:-0.81px">GLOBALVAR_PERSISTENT</div>
<div class="t " style="left:368px;top:340px;;letter-spacing:0.07px">wBatteryIn_Rcv</div>
<div class="t " style="left:562px;top:340px;;letter-spacing:-0.71px">WORD</div>
<div class="t " style="left:746px;top:340px;;letter-spacing:-0.2px">%MB288 - %MB289</div>
<svg style="left:901px;top:339px" width="14" height="15" viewBox="0 0 14 15"><rect x="1" y="1.500" width="12.500" height="13" rx="2.500" fill="#b8b8b8" opacity=".55"/><rect x=".500" y=".500" width="13" height="13" rx="2.500" fill="url(#ck)" stroke="#18a42a" stroke-width=".8"/><path d="M3.200 7l2.500 2.500 4.800-5" fill="none" stroke="#f2f2f2" stroke-width="2.100"/></svg>
<div class="doth" style="left:9px;top:367px;width:10px"></div>
<div class="t " style="left:24px;top:361px;;letter-spacing:-0.23px">%MB290-%MB293</div>
<div class="t " style="left:175px;top:361px;;letter-spacing:-0.81px">GLOBALVAR_PERSISTENT</div>
<div class="t " style="left:368px;top:361px;;letter-spacing:-0.17px">dwWaitTime</div>
<div class="t " style="left:562px;top:361px;;letter-spacing:-0.76px">DWORD</div>
<div class="t " style="left:746px;top:361px;;letter-spacing:-0.2px">%MB290 - %MB293</div>
<svg style="left:901px;top:360px" width="14" height="15" viewBox="0 0 14 15"><rect x="1" y="1.500" width="12.500" height="13" rx="2.500" fill="#b8b8b8" opacity=".55"/><rect x=".500" y=".500" width="13" height="13" rx="2.500" fill="url(#ck)" stroke="#18a42a" stroke-width=".8"/><path d="M3.200 7l2.500 2.500 4.800-5" fill="none" stroke="#f2f2f2" stroke-width="2.100"/></svg>
<div class="doth" style="left:9px;top:388px;width:10px"></div>
<div class="t " style="left:24px;top:382px;;letter-spacing:-0.23px">%MB294-%MB297</div>
<div class="t " style="left:175px;top:382px;;letter-spacing:-0.81px">GLOBALVAR_PERSISTENT</div>
<div class="t " style="left:368px;top:382px;;letter-spacing:-0.51px">dwBlockRime</div>
<div class="t " style="left:562px;top:382px;;letter-spacing:-0.76px">DWORD</div>
<div class="t " style="left:746px;top:382px;;letter-spacing:-0.2px">%MB294 - %MB297</div>
<svg style="left:901px;top:381px" width="14" height="15" viewBox="0 0 14 15"><rect x="1" y="1.500" width="12.500" height="13" rx="2.500" fill="#b8b8b8" opacity=".55"/><rect x=".500" y=".500" width="13" height="13" rx="2.500" fill="url(#ck)" stroke="#18a42a" stroke-width=".8"/><path d="M3.200 7l2.500 2.500 4.800-5" fill="none" stroke="#f2f2f2" stroke-width="2.100"/></svg>
<div class="doth" style="left:9px;top:409px;width:10px"></div>
<div class="t " style="left:24px;top:403px;;letter-spacing:-0.27px">%MB298</div>
<div class="t " style="left:175px;top:403px;;letter-spacing:-0.81px">GLOBALVAR_PERSISTENT</div>
<div class="t " style="left:368px;top:403px;;letter-spacing:-0.45px">bGetCircleTimesToMES</div>
<div class="t " style="left:562px;top:403px;;letter-spacing:-0.89px">BOOL</div>
<div class="t " style="left:746px;top:403px;;letter-spacing:-0.23px">%MX298.0</div>
<svg style="left:901px;top:402px" width="14" height="15" viewBox="0 0 14 15"><rect x="1" y="1.500" width="12.500" height="13" rx="2.500" fill="#b8b8b8" opacity=".55"/><rect x=".500" y=".500" width="13" height="13" rx="2.500" fill="url(#ck)" stroke="#18a42a" stroke-width=".8"/><path d="M3.200 7l2.500 2.500 4.800-5" fill="none" stroke="#f2f2f2" stroke-width="2.100"/></svg>
<div class="doth" style="left:9px;top:430px;width:10px"></div>
<div class="t " style="left:24px;top:424px;;letter-spacing:-0.23px">%MB300-%MB301</div>
<div class="t " style="left:175px;top:424px;;letter-spacing:-0.81px">GLOBALVAR_PERSISTENT</div>
<div class="t " style="left:368px;top:424px;;letter-spacing:-0.1px">wBatteryIn_SendTime01</div>
<div class="t " style="left:562px;top:424px;;letter-spacing:-0.71px">WORD</div>
<div class="t " style="left:746px;top:424px;;letter-spacing:-0.2px">%MB300 - %MB301</div>
<svg style="left:901px;top:423px" width="14" height="15" viewBox="0 0 14 15"><rect x="1" y="1.500" width="12.500" height="13" rx="2.500" fill="#b8b8b8" opacity=".55"/><rect x=".500" y=".500" width="13" height="13" rx="2.500" fill="url(#ck)" stroke="#18a42a" stroke-width=".8"/><path d="M3.200 7l2.500 2.500 4.800-5" fill="none" stroke="#f2f2f2" stroke-width="2.100"/></svg>
<div class="doth" style="left:9px;top:451px;width:10px"></div>
<div class="t " style="left:24px;top:445px;;letter-spacing:-0.23px">%MB304-%MB305</div>
<div class="t " style="left:175px;top:445px;;letter-spacing:-0.81px">GLOBALVAR_PERSISTENT</div>
<div class="t " style="left:368px;top:445px;;letter-spacing:-0.1px">wBatteryIn_SendTime02</div>
<div class="t " style="left:562px;top:445px;;letter-spacing:-0.71px">WORD</div>
<div class="t " style="left:746px;top:445px;;letter-spacing:-0.2px">%MB304 - %MB305</div>
<svg style="left:901px;top:444px" width="14" height="15" viewBox="0 0 14 15"><rect x="1" y="1.500" width="12.500" height="13" rx="2.500" fill="#b8b8b8" opacity=".55"/><rect x=".500" y=".500" width="13" height="13" rx="2.500" fill="url(#ck)" stroke="#18a42a" stroke-width=".8"/><path d="M3.200 7l2.500 2.500 4.800-5" fill="none" stroke="#f2f2f2" stroke-width="2.100"/></svg>
<div class="doth" style="left:9px;top:472px;width:10px"></div>
<div class="t " style="left:24px;top:466px;;letter-spacing:-0.23px">%MB306-%MB309</div>
<div class="t " style="left:175px;top:466px;;letter-spacing:-0.81px">GLOBALVAR_PERSISTENT</div>
<div class="t " style="left:368px;top:466px;;letter-spacing:-0.26px">dwWorkTime</div>
<div class="t " style="left:562px;top:466px;;letter-spacing:-0.76px">DWORD</div>
<div class="t " style="left:746px;top:466px;;letter-spacing:-0.2px">%MB306 - %MB309</div>
<svg style="left:901px;top:465px" width="14" height="15" viewBox="0 0 14 15"><rect x="1" y="1.500" width="12.500" height="13" rx="2.500" fill="#b8b8b8" opacity=".55"/><rect x=".500" y=".500" width="13" height="13" rx="2.500" fill="url(#ck)" stroke="#18a42a" stroke-width=".8"/><path d="M3.200 7l2.500 2.500 4.800-5" fill="none" stroke="#f2f2f2" stroke-width="2.100"/></svg>
<div class="doth" style="left:9px;top:493px;width:10px"></div>
<div class="t " style="left:24px;top:487px;;letter-spacing:-0.23px">%MB310-%MB313</div>
<div class="t " style="left:175px;top:487px;;letter-spacing:-0.81px">GLOBALVAR_PERSISTENT</div>
<div class="t " style="left:368px;top:487px;;letter-spacing:-0.32px">dwWeldUseTimes_01</div>
<div class="t " style="left:562px;top:487px;;letter-spacing:-0.76px">DWORD</div>
<div class="t " style="left:746px;top:487px;;letter-spacing:-0.2px">%MB310 - %MB313</div>
<svg style="left:901px;top:486px" width="14" height="15" viewBox="0 0 14 15"><rect x="1" y="1.500" width="12.500" height="13" rx="2.500" fill="#b8b8b8" opacity=".55"/><rect x=".500" y=".500" width="13" height="13" rx="2.500" fill="url(#ck)" stroke="#18a42a" stroke-width=".8"/><path d="M3.200 7l2.500 2.500 4.800-5" fill="none" stroke="#f2f2f2" stroke-width="2.100"/></svg>
<div class="doth" style="left:9px;top:514px;width:10px"></div>
<div class="t " style="left:24px;top:508px;;letter-spacing:-0.23px">%MB314-%MB317</div>
<div class="t " style="left:175px;top:508px;;letter-spacing:-0.81px">GLOBALVAR_PERSISTENT</div>
<div class="t " style="left:368px;top:508px;;letter-spacing:-0.32px">dwWeldUseTimes_02</div>
<div class="t " style="left:562px;top:508px;;letter-spacing:-0.76px">DWORD</div>
<div class="t " style="left:746px;top:508px;;letter-spacing:-0.2px">%MB314 - %MB317</div>
<svg style="left:901px;top:507px" width="14" height="15" viewBox="0 0 14 15"><rect x="1" y="1.500" width="12.500" height="13" rx="2.500" fill="#b8b8b8" opacity=".55"/><rect x=".500" y=".500" width="13" height="13" rx="2.500" fill="url(#ck)" stroke="#18a42a" stroke-width=".8"/><path d="M3.200 7l2.500 2.500 4.800-5" fill="none" stroke="#f2f2f2" stroke-width="2.100"/></svg>
<div class="doth" style="left:9px;top:535px;width:10px"></div>
<div class="t " style="left:24px;top:529px;;letter-spacing:-0.23px">%MB350-%MB351</div>
<div class="t " style="left:175px;top:529px;;letter-spacing:-0.81px">GLOBALVAR_PERSISTENT</div>
<div class="t " style="left:368px;top:529px;;letter-spacing:-0.3px">HMISetSpeedErr</div>
<div class="t " style="left:562px;top:529px;;letter-spacing:-0.24px">INT</div>
<div class="t " style="left:746px;top:529px;;letter-spacing:-0.2px">%MB350 - %MB351</div>
<svg style="left:901px;top:528px" width="14" height="15" viewBox="0 0 14 15"><rect x="1" y="1.500" width="12.500" height="13" rx="2.500" fill="#b8b8b8" opacity=".55"/><rect x=".500" y=".500" width="13" height="13" rx="2.500" fill="url(#ck)" stroke="#18a42a" stroke-width=".8"/><path d="M3.200 7l2.500 2.500 4.800-5" fill="none" stroke="#f2f2f2" stroke-width="2.100"/></svg>
<div class="doth" style="left:9px;top:556px;width:10px"></div>
<div class="t " style="left:24px;top:550px;;letter-spacing:-0.23px">%MB356-%MB359</div>
<div class="t " style="left:175px;top:550px;;letter-spacing:-0.81px">GLOBALVAR_PERSISTENT</div>
<div class="t " style="left:368px;top:550px;;letter-spacing:-0.32px">HMISetSpeed</div>
<div class="t " style="left:562px;top:550px;;letter-spacing:-0.94px">REAL</div>
<div class="t " style="left:746px;top:550px;;letter-spacing:-0.2px">%MB356 - %MB359</div>
<svg style="left:901px;top:549px" width="14" height="15" viewBox="0 0 14 15"><rect x="1" y="1.500" width="12.500" height="13" rx="2.500" fill="#b8b8b8" opacity=".55"/><rect x=".500" y=".500" width="13" height="13" rx="2.500" fill="url(#ck)" stroke="#18a42a" stroke-width=".8"/><path d="M3.200 7l2.500 2.500 4.800-5" fill="none" stroke="#f2f2f2" stroke-width="2.100"/></svg>
<div class="doth" style="left:9px;top:577px;width:10px"></div>
<div class="t " style="left:24px;top:571px;;letter-spacing:-0.27px">%MB380</div>
<div class="t " style="left:175px;top:571px;;letter-spacing:-0.81px">GLOBALVAR_PERSISTENT</div>
<div class="t " style="left:368px;top:571px;;letter-spacing:-0.36px">GV_SafeDoor_0_Disable</div>
<div class="t " style="left:562px;top:571px;;letter-spacing:-0.89px">BOOL</div>
<div class="t " style="left:746px;top:571px;;letter-spacing:-0.23px">%MX380.0</div>
<svg style="left:901px;top:570px" width="14" height="15" viewBox="0 0 14 15"><rect x="1" y="1.500" width="12.500" height="13" rx="2.500" fill="#b8b8b8" opacity=".55"/><rect x=".500" y=".500" width="13" height="13" rx="2.500" fill="url(#ck)" stroke="#18a42a" stroke-width=".8"/><path d="M3.200 7l2.500 2.500 4.800-5" fill="none" stroke="#f2f2f2" stroke-width="2.100"/></svg>
<div class="doth" style="left:9px;top:598px;width:10px"></div>
<div class="t " style="left:24px;top:592px;;letter-spacing:-0.23px">%MB400-%MB407</div>
<div class="t " style="left:175px;top:592px;;letter-spacing:-0.81px">GLOBALVAR_PERSISTENT</div>
<div class="t " style="left:368px;top:592px;;letter-spacing:-0.05px">rBatteryOutVel_Rcv_01</div>
<div class="t " style="left:562px;top:592px;;letter-spacing:-0.97px">LREAL</div>
<div class="t " style="left:746px;top:592px;;letter-spacing:-0.2px">%MB400 - %MB407</div>
<svg style="left:901px;top:591px" width="14" height="15" viewBox="0 0 14 15"><rect x="1" y="1.500" width="12.500" height="13" rx="2.500" fill="#b8b8b8" opacity=".55"/><rect x=".500" y=".500" width="13" height="13" rx="2.500" fill="url(#ck)" stroke="#18a42a" stroke-width=".8"/><path d="M3.200 7l2.500 2.500 4.800-5" fill="none" stroke="#f2f2f2" stroke-width="2.100"/></svg>
<div class="doth" style="left:9px;top:619px;width:10px"></div>
<div class="t " style="left:24px;top:613px;;letter-spacing:-0.23px">%MB408-%MB415</div>
<div class="t " style="left:175px;top:613px;;letter-spacing:-0.81px">GLOBALVAR_PERSISTENT</div>
<div class="t " style="left:368px;top:613px;;letter-spacing:-0.05px">rBatteryOutAcc_Rcv_01</div>
<div class="t " style="left:562px;top:613px;;letter-spacing:-0.97px">LREAL</div>
<div class="t " style="left:746px;top:613px;;letter-spacing:-0.2px">%MB408 - %MB415</div>
<svg style="left:901px;top:612px" width="14" height="15" viewBox="0 0 14 15"><rect x="1" y="1.500" width="12.500" height="13" rx="2.500" fill="#b8b8b8" opacity=".55"/><rect x=".500" y=".500" width="13" height="13" rx="2.500" fill="url(#ck)" stroke="#18a42a" stroke-width=".8"/><path d="M3.200 7l2.500 2.500 4.800-5" fill="none" stroke="#f2f2f2" stroke-width="2.100"/></svg>
<div class="doth" style="left:9px;top:640px;width:10px"></div>
<div class="t " style="left:24px;top:634px;;letter-spacing:-0.23px">%MB416-%MB423</div>
<div class="t " style="left:175px;top:634px;;letter-spacing:-0.81px">GLOBALVAR_PERSISTENT</div>
<div class="t " style="left:368px;top:634px;;letter-spacing:-0.06px">rBatteryOutDec_Rcv_01</div>
<div class="t " style="left:562px;top:634px;;letter-spacing:-0.97px">LREAL</div>
<div class="t " style="left:746px;top:634px;;letter-spacing:-0.2px">%MB416 - %MB423</div>
<svg style="left:901px;top:633px" width="14" height="15" viewBox="0 0 14 15"><rect x="1" y="1.500" width="12.500" height="13" rx="2.500" fill="#b8b8b8" opacity=".55"/><rect x=".500" y=".500" width="13" height="13" rx="2.500" fill="url(#ck)" stroke="#18a42a" stroke-width=".8"/><path d="M3.200 7l2.500 2.500 4.800-5" fill="none" stroke="#f2f2f2" stroke-width="2.100"/></svg>
<div class="doth" style="left:9px;top:661px;width:10px"></div>
<div class="t " style="left:24px;top:655px;;letter-spacing:-0.23px">%MB424-%MB427</div>
<div class="t " style="left:175px;top:655px;;letter-spacing:-0.81px">GLOBALVAR_PERSISTENT</div>
<div class="t " style="left:368px;top:655px;;letter-spacing:-0.07px">diBatteryOutDirection_Rcv_01</div>
<div class="t " style="left:562px;top:655px;;letter-spacing:-0.42px">DINT</div>
<div class="t " style="left:746px;top:655px;;letter-spacing:-0.2px">%MB424 - %MB427</div>
<svg style="left:901px;top:654px" width="14" height="15" viewBox="0 0 14 15"><rect x="1" y="1.500" width="12.500" height="13" rx="2.500" fill="#b8b8b8" opacity=".55"/><rect x=".500" y=".500" width="13" height="13" rx="2.500" fill="url(#ck)" stroke="#18a42a" stroke-width=".8"/><path d="M3.200 7l2.500 2.500 4.800-5" fill="none" stroke="#f2f2f2" stroke-width="2.100"/></svg>
</div>
<div class="a" style="left:415px;top:952px;width:1505px;height:23px;background:#c2cfdf;border:1px solid #9aa6b4;border-bottom:0;border-left-color:#b4bfcc"></div>
<div class="a" style="left:415px;top:975px;width:1505px;height:12px;background:#f0f0f0"></div>
<div class="t cj" style="left:421px;top:958px;font-size:12px">交叉引用表</div>
<svg style="left:1863px;top:963px" width="9" height="5" viewBox="0 0 9 5"><path d="M0 0h9L4.500 4.800z" fill="#000"/></svg>
<svg style="left:1884px;top:960px" width="8" height="10" viewBox="0 0 8 10"><path d="M2 .600h3.600v4.400H2zM.300 5.200h7M3.800 5.200v4.300" fill="none" stroke="#000" stroke-width="1.200"/><path d="M5 1v4" stroke="#000" stroke-width="1.300"/></svg>
<svg style="left:1904px;top:960px" width="9" height="9" viewBox="0 0 9 9"><path d="M.800 .800l6.800 6.600M7.600 .800l-6.800 6.600" stroke="#000" stroke-width="2.100"/></svg>
<div class="a" style="left:415px;top:987px;width:1505px;height:1px;background:#b8b8b8"></div>
<div class="a" style="left:415px;top:987px;width:89px;height:22px;background:#fdfdfd;border:1px solid #b4b4b4;border-top:0;border-radius:0 0 4px 4px"></div>
<svg style="left:420px;top:991px" width="11" height="12" viewBox="0 0 11 12"><rect x=".750" y=".750" width="9.500" height="10.500" fill="#fff" stroke="#111" stroke-width="1.500"/><rect x="0" y="0" width="11" height="2.500" fill="#1a1a8a"/><path d="M3.500 5l4 4M7.500 5l-4 4" stroke="#c0187a" stroke-width="1.600"/><path d="M5 9.500h4V6z" fill="#c0187a"/></svg>
<div class="t cj" style="left:437px;top:991px;font-size:12px">交叉引用表</div>
<svg style="left:506px;top:989px" width="16" height="16" viewBox="0 0 16 16"><path d="M1 1.500h15" stroke="#2233cc" stroke-width="1.400"/><rect x="1.500" y="2.500" width="5" height="4" fill="#fff" stroke="#5a1010" stroke-width="1.200"/><rect x="6.500" y="6.500" width="5" height="4" fill="#fff" stroke="#5a1010" stroke-width="1.200"/><rect x="10.500" y="9.500" width="5" height="4" fill="#fff" stroke="#5a1010" stroke-width="1.200"/><path d="M3.500 6.500v5h2M1 3v9c0 2 1.500 3 3 3.500" fill="none" stroke="#2233cc"/><path d="M14.500 2v7" stroke="#5a1010"/></svg>
<div class="t cj" style="left:526px;top:991px;font-size:12px;color:#6e6e6e">调用栈</div>
<div class="a" style="left:566px;top:990px;width:1px;height:15px;background:#b4b4b4"></div>
<svg style="left:570px;top:989px" width="16" height="16" viewBox="0 0 16 16"><rect x="5.500" y=".500" width="9" height="8" fill="#4a72d8" stroke="#1e3c9a"/><path d="M7 3.500h6M7 5.500h6" stroke="#dfe8ff"/><rect x=".500" y="6.500" width="10" height="8" fill="#5a86ea" stroke="#1e3c9a"/><path d="M2 9.500h7M2 11.500h7" stroke="#eef3ff"/><rect x="11" y="9.500" width="4.500" height="4" fill="#e8eefc" stroke="#1e3c9a"/></svg>
<div class="t cj" style="left:590px;top:991px;font-size:12px;color:#6e6e6e">组态设备信息输出</div>
<div class="a" style="left:0px;top:1010px;width:1920px;height:1px;background:#dadada"></div>
<div class="a" style="left:0px;top:1011px;width:1920px;height:21px;background:#f0f0f0"></div>
<div class="a" style="left:0px;top:1032px;width:1920px;height:1px;background:#4a4a4a"></div>
<div class="a" style="left:1045px;top:1013px;width:1px;height:17px;background:#d6d6d6"></div>
<div class="a" style="left:1338px;top:1013px;width:1px;height:17px;background:#d6d6d6"></div>
<div class="a" style="left:1579px;top:1013px;width:1px;height:17px;background:#d6d6d6"></div>
<div class="a" style="left:1603px;top:1013px;width:1px;height:17px;background:#d6d6d6"></div>
<div class="a" style="left:1752px;top:1013px;width:1px;height:17px;background:#d6d6d6"></div>
<div class="a" style="left:1902px;top:1013px;width:1px;height:17px;background:#d6d6d6"></div>
<div class="t cj" style="left:1077px;top:1015px;font-size:12px">最后一次编译:</div>
<svg style="left:1167px;top:1016px" width="11" height="11" viewBox="0 0 11 11"><circle cx="5.500" cy="5.500" r="5.200" fill="#e02020" stroke="#9a0c0c" stroke-width=".6"/><path d="M3.300 3.300l4.400 4.400M7.700 3.300L3.300 7.700" stroke="#fff" stroke-width="1.500"/></svg>
<div class="t " style="left:1183px;top:1014px;">0</div>
<svg style="left:1196px;top:1016px" width="11" height="11" viewBox="0 0 11 11"><circle cx="5.500" cy="5.500" r="5.200" fill="#f7e020" stroke="#8a7800" stroke-width=".7"/><path d="M5.500 2.500v3.800" stroke="#222" stroke-width="1.400"/><circle cx="5.500" cy="8.200" r=".9" fill="#222"/></svg>
<div class="t " style="left:1213px;top:1014px;font-weight:bold">2</div>
<div class="t cj" style="left:1243px;top:1015px;font-size:12px">预编译:</div>
<svg style="left:1295px;top:1015px" width="16" height="13" viewBox="0 0 16 13"><path d="M1.500 7.500l4 4.500L14.500 1.500" fill="none" stroke="#1f9a2a" stroke-width="2.200"/></svg>
<div class="t cj" style="left:1402px;top:1015px;font-size:12px;letter-spacing:0.53px">当前用户: (没有用户)</div>
<svg style="left:1584px;top:1014px" width="14" height="15" viewBox="0 0 14 15"><path d="M7 .500l6 2v5c0 3.500-3 6-6 7-3-1-6-3.500-6-7v-5z" fill="#d8d8d8" stroke="#555"/><path d="M7 .500v14c3-1 6-3.500 6-7v-5z" fill="#f2c820"/><path d="M7 .500l6 2v5c0 3.500-3 6-6 7-3-1-6-3.500-6-7v-5z" fill="none" stroke="#555"/></svg>
</body></html>
